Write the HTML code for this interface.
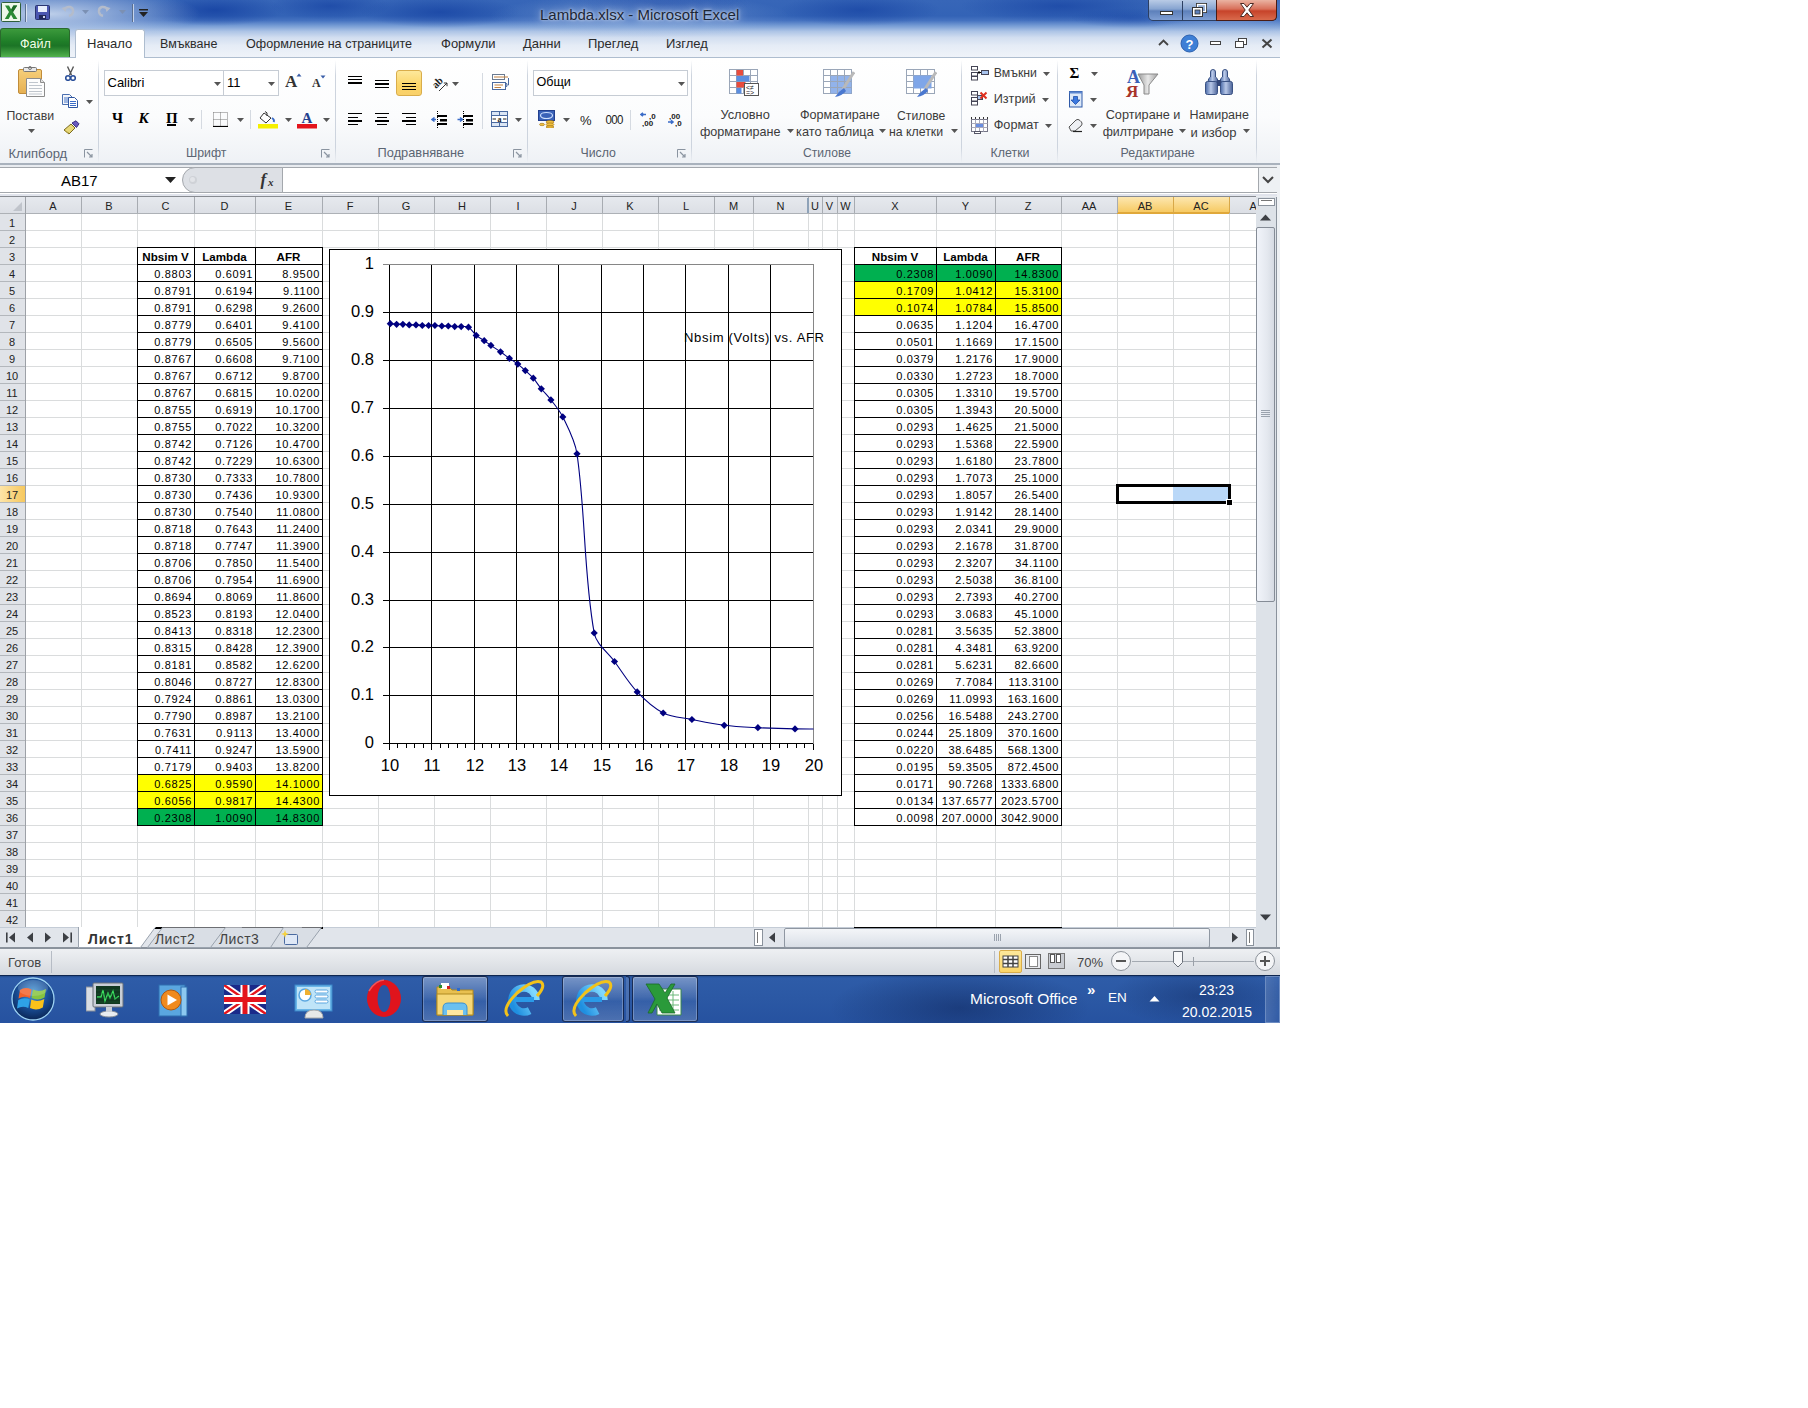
<!DOCTYPE html><html><head><meta charset="utf-8"><style>
*{margin:0;padding:0;box-sizing:border-box}
html,body{width:1808px;height:1408px;background:#fff;overflow:hidden;font-family:"Liberation Sans", sans-serif}
.a{position:absolute}
.t{position:absolute;white-space:nowrap;line-height:1}
</style></head><body>
<div class="a" style="left:0px;top:0px;width:1280px;height:57px;background:linear-gradient(180deg,#3766b8 0%,#3363b6 28%,#4572c0 36%,#759bd4 45%,#adc4e6 55%,#d2def0 66%,#e5ecf6 80%,#eff3f9 100%)"></div>
<div class="a" style="left:0px;top:0px;width:1280px;height:40px;background:radial-gradient(ellipse 70px 16px at 215px 10px,rgba(18,62,160,.75),rgba(18,62,160,0)),radial-gradient(ellipse 60px 14px at 330px 6px,rgba(18,62,160,.6),rgba(18,62,160,0)),radial-gradient(ellipse 80px 16px at 440px 12px,rgba(18,62,160,.65),rgba(18,62,160,0)),radial-gradient(ellipse 90px 14px at 660px 4px,rgba(18,62,160,.55),rgba(18,62,160,0)),radial-gradient(ellipse 80px 16px at 860px 10px,rgba(18,62,160,.6),rgba(18,62,160,0)),radial-gradient(ellipse 100px 16px at 1060px 6px,rgba(18,62,160,.6),rgba(18,62,160,0)),radial-gradient(ellipse 60px 10px at 1130px 18px,rgba(18,62,160,.4),rgba(18,62,160,0))"></div>
<div class="a" style="left:0px;top:0px;width:1280px;height:40px;background:radial-gradient(ellipse 150px 28px at 50px 14px,rgba(196,212,236,.95),rgba(196,212,236,0)),radial-gradient(ellipse 150px 22px at 640px 16px,rgba(150,180,225,.5),rgba(150,180,225,0)),radial-gradient(ellipse 90px 22px at 1230px 14px,rgba(150,180,225,.5),rgba(150,180,225,0))"></div>
<svg class="a" style="left:1px;top:2px" width="20" height="20" viewBox="0 0 20 20"><rect x="0.5" y="0.5" width="19" height="19" rx="1" fill="#eef7ea" stroke="#2f5f3a"/><path d="M4 3.5h4l2.2 4L12.4 3.5h3.8l-4.2 6.5L16.4 17h-4l-2.4-4.2L7.6 17H3.8l4.2-7Z" fill="#2a8a34"/><path d="M10.2 7.5L12.4 3.5h3.8l-4.2 6.5Z" fill="#1d6a28"/></svg>
<div class="a" style="left:25px;top:4px;width:1px;height:18px;background:#5a6f90"></div>
<div class="a" style="left:26px;top:4px;width:1px;height:18px;background:rgba(255,255,255,.6)"></div>
<svg class="a" style="left:35px;top:5px" width="15" height="15" viewBox="0 0 15 15"><rect x="0.5" y="0.5" width="14" height="14" rx="1" fill="#4a56b0" stroke="#2a3570"/><rect x="3" y="1" width="9" height="6" fill="#e8eefc"/><rect x="4" y="10" width="7" height="4" fill="#20285a"/><rect x="8" y="11" width="2" height="2" fill="#cfd6f0"/></svg>
<svg class="a" style="left:61px;top:5px" width="14" height="12" viewBox="0 0 14 12"><path d="M3 5Q5 1.5 9 2Q12.5 3 12 7Q11.5 10 8 11" stroke="#b4bccb" stroke-width="2.4" fill="none"/><path d="M0.5 3L6 1.5L4.5 7Z" fill="#b4bccb"/></svg>
<svg class="a" style="left:82px;top:10px" width="7" height="4" viewBox="0 0 7 4"><path d="M0 0H7L3.5 4Z" fill="#7b90b3"/></svg>
<svg class="a" style="left:97px;top:5px" width="14" height="12" viewBox="0 0 14 12"><path d="M11 5Q9 1.5 5 2Q1.5 3 2 7Q2.5 10 6 11" stroke="#b4bccb" stroke-width="2.4" fill="none"/><path d="M13.5 3L8 1.5L9.5 7Z" fill="#b4bccb"/></svg>
<svg class="a" style="left:119px;top:10px" width="7" height="4" viewBox="0 0 7 4"><path d="M0 0H7L3.5 4Z" fill="#7b90b3"/></svg>
<div class="a" style="left:132px;top:4px;width:1px;height:18px;background:#5a6f90"></div>
<div class="a" style="left:133px;top:4px;width:1px;height:18px;background:rgba(255,255,255,.6)"></div>
<svg class="a" style="left:139px;top:9px" width="9" height="8" viewBox="0 0 9 8"><rect x="0" y="0" width="9" height="1.5" fill="#222"/><path d="M0 3H9L4.5 8Z" fill="#222"/></svg>
<div class="t" style="left:540.0px;top:6.80px;font-size:15px;color:#1b2636;text-shadow:0 0 8px rgba(255,255,255,.9),0 0 3px rgba(255,255,255,.8)">Lambda.xlsx  -  Microsoft Excel</div>
<div class="a" style="left:1148px;top:0px;width:129px;height:21px;border:1px solid #2c3f62;border-top:none;border-radius:0 0 5px 5px;overflow:hidden;background:linear-gradient(180deg,#b9cbe6 0%,#87a4d0 45%,#5d80bb 55%,#7f9fd3 100%)"></div>
<div class="a" style="left:1216px;top:0px;width:61px;height:21px;border:1px solid #4a1c14;border-top:none;border-radius:0 0 5px 0;background:linear-gradient(180deg,#eab3a2 0%,#d8705a 45%,#c7432a 55%,#d96a4c 100%)"></div>
<div class="a" style="left:1182px;top:1px;width:1px;height:19px;background:#2c3f62"></div>
<svg class="a" style="left:1160px;top:11px" width="13" height="4" viewBox="0 0 13 4"><rect x="0.5" y="0.5" width="12" height="3" fill="#fff" stroke="#333" stroke-width="1"/></svg>
<svg class="a" style="left:1192px;top:3px" width="15" height="14" viewBox="0 0 15 14"><rect x="4.5" y="0.5" width="10" height="9" fill="none" stroke="#333" stroke-width="1"/><rect x="5.5" y="1.5" width="8" height="7" fill="none" stroke="#fff" stroke-width="1.3"/><rect x="0.5" y="4.5" width="10" height="9" fill="#fff" stroke="#333"/><rect x="3" y="7" width="5" height="4" fill="#5d80bb" stroke="#333" stroke-width=".8"/></svg>
<svg class="a" style="left:1238px;top:2px" width="18" height="16" viewBox="0 0 18 16"><path d="M2.5 1.5H6L9 5.2 12 1.5H15.5L10.8 8 15.5 14.5H12L9 10.8 6 14.5H2.5L7.2 8Z" fill="#fff" stroke="#4a2a24" stroke-width="1"/></svg>
<div class="a" style="left:0px;top:28px;width:70px;height:29px;background:linear-gradient(180deg,#3c9a3c 0%,#1f7e28 45%,#1c7426 60%,#52b24e 100%);border-radius:3px 3px 0 0;border:1px solid #2a6a2c;border-bottom:none"></div>
<div class="t" style="left:20.0px;top:37.63px;font-size:12.6px;color:#f2ffe8">Файл</div>
<div class="a" style="left:75px;top:29px;width:70px;height:29px;background:#fff;border:1px solid #aebdcf;border-bottom:none;border-radius:3px 3px 0 0"></div>
<div class="t" style="left:87.0px;top:37.30px;font-size:13px;color:#2b2b2b">Начало</div>
<div class="t" style="left:160.0px;top:37.72px;font-size:12.5px;color:#2b2b2b">Вмъкване</div>
<div class="t" style="left:246.0px;top:37.63px;font-size:12.6px;color:#2b2b2b">Оформление на страниците</div>
<div class="t" style="left:441.0px;top:37.30px;font-size:13px;color:#2b2b2b">Формули</div>
<div class="t" style="left:523.0px;top:37.30px;font-size:13px;color:#2b2b2b">Данни</div>
<div class="t" style="left:588.0px;top:37.30px;font-size:13px;color:#2b2b2b">Преглед</div>
<div class="t" style="left:666.0px;top:37.30px;font-size:13px;color:#2b2b2b">Изглед</div>
<svg class="a" style="left:1158px;top:39px" width="11" height="7" viewBox="0 0 11 7"><path d="M1 6L5.5 1.5 10 6" stroke="#444" stroke-width="1.8" fill="none"/></svg>
<svg class="a" style="left:1180px;top:34px" width="19" height="19" viewBox="0 0 19 19"><circle cx="9.5" cy="9.5" r="8.5" fill="#3d7fd6" stroke="#2a5fae"/><text x="9.5" y="14.5" text-anchor="middle" font-family="Liberation Sans" font-weight="bold" font-size="13" fill="#fff">?</text></svg>
<div class="a" style="left:1210px;top:41px;width:11px;height:4px;background:#fff;border:1px solid #444"></div>
<svg class="a" style="left:1235px;top:38px" width="13" height="11" viewBox="0 0 13 11"><rect x="3.5" y="0.5" width="8" height="6" fill="#fff" stroke="#444"/><rect x="0.5" y="3.5" width="8" height="6" fill="#fff" stroke="#444"/></svg>
<svg class="a" style="left:1261px;top:38px" width="12" height="11" viewBox="0 0 12 11"><path d="M1.5 1.5L10.5 9.5M10.5 1.5L1.5 9.5" stroke="#444" stroke-width="2"/></svg>
<div class="a" style="left:0px;top:57px;width:1280px;height:107px;background:linear-gradient(180deg,#ffffff 0%,#fbfcfd 55%,#eef1f5 100%);border-top:1px solid #aebdcf"></div>
<div class="a" style="left:0px;top:163px;width:1280px;height:2px;background:#a9b2bd"></div>
<div class="a" style="left:76px;top:57px;width:68px;height:1px;background:#fff"></div>
<div class="a" style="left:98px;top:60px;width:1px;height:103px;background:linear-gradient(180deg,rgba(205,212,222,0),#cdd4de 15%,#cdd4de 85%,rgba(205,212,222,0))"></div>
<div class="a" style="left:335px;top:60px;width:1px;height:103px;background:linear-gradient(180deg,rgba(205,212,222,0),#cdd4de 15%,#cdd4de 85%,rgba(205,212,222,0))"></div>
<div class="a" style="left:527px;top:60px;width:1px;height:103px;background:linear-gradient(180deg,rgba(205,212,222,0),#cdd4de 15%,#cdd4de 85%,rgba(205,212,222,0))"></div>
<div class="a" style="left:691px;top:60px;width:1px;height:103px;background:linear-gradient(180deg,rgba(205,212,222,0),#cdd4de 15%,#cdd4de 85%,rgba(205,212,222,0))"></div>
<div class="a" style="left:961px;top:60px;width:1px;height:103px;background:linear-gradient(180deg,rgba(205,212,222,0),#cdd4de 15%,#cdd4de 85%,rgba(205,212,222,0))"></div>
<div class="a" style="left:1057px;top:60px;width:1px;height:103px;background:linear-gradient(180deg,rgba(205,212,222,0),#cdd4de 15%,#cdd4de 85%,rgba(205,212,222,0))"></div>
<div class="a" style="left:1256px;top:60px;width:1px;height:103px;background:linear-gradient(180deg,rgba(205,212,222,0),#cdd4de 15%,#cdd4de 85%,rgba(205,212,222,0))"></div>
<div class="t" style="left:8.5px;top:146.50px;font-size:13px;color:#5b6573">Клипборд</div>
<svg class="a" style="left:84px;top:149px" width="9" height="9" viewBox="0 0 9 9"><path d="M0.5 8.5V0.5H8.5" stroke="#8a94a0" fill="none"/><path d="M3 3L8 8M5 8H8V5" stroke="#8a94a0" stroke-width="1.2" fill="none"/></svg>
<div class="t" style="left:186.0px;top:147.09px;font-size:12.3px;color:#5b6573">Шрифт</div>
<svg class="a" style="left:321px;top:149px" width="9" height="9" viewBox="0 0 9 9"><path d="M0.5 8.5V0.5H8.5" stroke="#8a94a0" fill="none"/><path d="M3 3L8 8M5 8H8V5" stroke="#8a94a0" stroke-width="1.2" fill="none"/></svg>
<div class="t" style="left:377.6px;top:146.66px;font-size:12.8px;color:#5b6573">Подравняване</div>
<svg class="a" style="left:513px;top:149px" width="9" height="9" viewBox="0 0 9 9"><path d="M0.5 8.5V0.5H8.5" stroke="#8a94a0" fill="none"/><path d="M3 3L8 8M5 8H8V5" stroke="#8a94a0" stroke-width="1.2" fill="none"/></svg>
<div class="t" style="left:580.5px;top:147.09px;font-size:12.3px;color:#5b6573">Число</div>
<svg class="a" style="left:677px;top:149px" width="9" height="9" viewBox="0 0 9 9"><path d="M0.5 8.5V0.5H8.5" stroke="#8a94a0" fill="none"/><path d="M3 3L8 8M5 8H8V5" stroke="#8a94a0" stroke-width="1.2" fill="none"/></svg>
<div class="t" style="left:803.0px;top:147.26px;font-size:12.1px;color:#5b6573">Стилове</div>
<div class="t" style="left:990.6px;top:147.00px;font-size:12.4px;color:#5b6573">Клетки</div>
<div class="t" style="left:1120.6px;top:147.00px;font-size:12.4px;color:#5b6573">Редактиране</div>
<svg class="a" style="left:17px;top:66px" width="29" height="32" viewBox="0 0 29 32"><defs><linearGradient id="cb" x1="0" y1="0" x2="0" y2="1"><stop offset="0" stop-color="#f6cf7a"/><stop offset="1" stop-color="#e6b052"/></linearGradient></defs><rect x="1.5" y="3.5" width="23" height="24" rx="1.5" fill="url(#cb)" stroke="#c08c3a"/><rect x="6.5" y="1.5" width="13" height="4" rx="1" fill="#e8e8e8" stroke="#777"/><circle cx="13" cy="2" r="1.5" fill="none" stroke="#777"/><path d="M9.5 12.5H23.5L27.5 16.5V30.5H9.5Z" fill="#fdfdfd" stroke="#8c8c8c"/><path d="M23.5 12.5V16.5H27.5" fill="#e0e0e0" stroke="#8c8c8c"/><path d="M12 16.5H21M12 19.5H25M12 22.5H25M12 25.5H25M12 28H25" stroke="#b9bfc7" stroke-width="0.9"/></svg>
<div class="t" style="left:6.5px;top:109.59px;font-size:12.3px;color:#3b3b3b">Постави</div>
<svg class="a" style="left:27.5px;top:129px" width="7" height="4" viewBox="0 0 7 4"><path d="M0 0H7L3.5 4Z" fill="#555"/></svg>
<svg class="a" style="left:65px;top:66px" width="11" height="15" viewBox="0 0 11 15"><path d="M2.5 0.5L6.5 9M8.5 0.5L4.5 9" stroke="#555" stroke-width="1.4"/><circle cx="3" cy="12" r="2.3" fill="none" stroke="#2a4f9a" stroke-width="1.6"/><circle cx="8" cy="12" r="2.3" fill="none" stroke="#2a4f9a" stroke-width="1.6"/></svg>
<svg class="a" style="left:62px;top:94px" width="17" height="14" viewBox="0 0 17 14"><path d="M0.5 0.5H7.5L10.5 3.5V10.5H0.5Z" fill="#f4f6fa" stroke="#4a6fb0"/><path d="M2 4H8M2 6H8M2 8H8" stroke="#4a78c8"/><path d="M6.5 3.5H12.5L15.5 6.5V13.5H6.5Z" fill="#fff" stroke="#2f56a0"/><path d="M8 7.5H14M8 9.5H14M8 11.5H14" stroke="#3a6cc8" stroke-width="1.2"/></svg>
<svg class="a" style="left:85.5px;top:99.5px" width="7" height="4" viewBox="0 0 7 4"><path d="M0 0H7L3.5 4Z" fill="#555"/></svg>
<svg class="a" style="left:62px;top:120px" width="18" height="16" viewBox="0 0 18 16"><path d="M2 10L9 4L13 8L7 14Z" fill="#e8d878" stroke="#7a6a20"/><path d="M10 3L14 0.8L17 3.8L14.5 7.5Z" fill="#6a5ac0" stroke="#3a2f80"/><path d="M3 11L7 13" stroke="#b8a440"/></svg>
<div class="a" style="left:104px;top:70px;width:120px;height:26px;background:#fff;border:1px solid #c6ccd4"></div>
<div class="a" style="left:223px;top:70px;width:56px;height:26px;background:#fff;border:1px solid #c6ccd4"></div>
<div class="t" style="left:107.5px;top:76.00px;font-size:13px;color:#000">Calibri</div>
<div class="t" style="left:227.0px;top:76.00px;font-size:13px;color:#000">11</div>
<svg class="a" style="left:213.5px;top:82px" width="7" height="4" viewBox="0 0 7 4"><path d="M0 0H7L3.5 4Z" fill="#555"/></svg>
<svg class="a" style="left:268px;top:82px" width="7" height="4" viewBox="0 0 7 4"><path d="M0 0H7L3.5 4Z" fill="#555"/></svg>
<svg class="a" style="left:285px;top:73px" width="17" height="15" viewBox="0 0 17 15"><text x="0" y="14" font-family="Liberation Serif" font-weight="bold" font-size="17" fill="#333">A</text><path d="M11.5 3.5H16.5L14 0.5Z" fill="#3a5ea8"/></svg>
<svg class="a" style="left:311px;top:75px" width="15" height="13" viewBox="0 0 15 13"><text x="1" y="12" font-family="Liberation Serif" font-weight="bold" font-size="12" fill="#333">A</text><path d="M9.5 0.5H14.5L12 3.5Z" fill="#3a5ea8"/></svg>
<div class="t" style="left:112.0px;top:110.50px;font-size:15px;color:#000;font-family:Liberation Serif,serif;font-weight:bold">Ч</div>
<div class="t" style="left:138.5px;top:110.50px;font-size:15px;color:#000;font-family:Liberation Serif,serif;font-weight:bold;font-style:italic">К</div>
<div class="t" style="left:166.0px;top:110.50px;font-size:15px;color:#000;font-family:Liberation Serif,serif;font-weight:bold">П</div>
<div class="a" style="left:167px;top:124px;width:9px;height:1.6px;background:#000"></div>
<svg class="a" style="left:187.5px;top:117.5px" width="7" height="4" viewBox="0 0 7 4"><path d="M0 0H7L3.5 4Z" fill="#555"/></svg>
<div class="a" style="left:201px;top:110px;width:1px;height:19px;background:#d5dae1"></div>
<svg class="a" style="left:213px;top:112px" width="15" height="15" viewBox="0 0 15 15"><path d="M0.5 0.5H14.5M0.5 7.5H14.5M0.5 0.5V14M7.5 0.5V14M14.5 0.5V14" stroke="#777" stroke-dasharray="1 1" fill="none"/><path d="M0 14.5H15" stroke="#000" stroke-width="1.2"/></svg>
<svg class="a" style="left:236.5px;top:117.5px" width="7" height="4" viewBox="0 0 7 4"><path d="M0 0H7L3.5 4Z" fill="#555"/></svg>
<div class="a" style="left:250px;top:110px;width:1px;height:19px;background:#d5dae1"></div>
<svg class="a" style="left:258px;top:111px" width="21" height="18" viewBox="0 0 21 18"><path d="M6 2L13 7L8 12L2 7Z" fill="#fff" stroke="#333"/><path d="M7 0.5Q10 1 9 5" stroke="#333" fill="none"/><path d="M14 7Q17 9 15.5 11" stroke="#3a6cc8" stroke-width="2" fill="none"/><rect x="0" y="13" width="20" height="4.5" fill="#f5f000"/></svg>
<svg class="a" style="left:284.5px;top:117.5px" width="7" height="4" viewBox="0 0 7 4"><path d="M0 0H7L3.5 4Z" fill="#555"/></svg>
<svg class="a" style="left:297px;top:111px" width="20" height="18" viewBox="0 0 20 18"><text x="10" y="11.5" text-anchor="middle" font-family="Liberation Serif" font-weight="bold" font-size="15" fill="#23408e">A</text><rect x="0" y="13" width="20" height="4.5" fill="#e4141c"/></svg>
<svg class="a" style="left:322.5px;top:117.5px" width="7" height="4" viewBox="0 0 7 4"><path d="M0 0H7L3.5 4Z" fill="#555"/></svg>
<div class="a" style="left:348px;top:75.5px;width:14px;height:1.3px;background:#000"></div>
<div class="a" style="left:348px;top:78.9px;width:14px;height:1.3px;background:#000"></div>
<div class="a" style="left:348px;top:82.3px;width:14px;height:1.3px;background:#000"></div>
<div class="a" style="left:375px;top:80.0px;width:14px;height:1.3px;background:#000"></div>
<div class="a" style="left:375px;top:83.4px;width:14px;height:1.3px;background:#000"></div>
<div class="a" style="left:375px;top:86.8px;width:14px;height:1.3px;background:#000"></div>
<div class="a" style="left:396px;top:70px;width:26px;height:26px;border:1px solid #d9ad4b;border-radius:3px;background:linear-gradient(180deg,#fde89b,#fbd568 60%,#f9d06a)"></div>
<div class="a" style="left:402px;top:83.0px;width:14px;height:1.3px;background:#000"></div>
<div class="a" style="left:402px;top:86.1px;width:14px;height:1.3px;background:#000"></div>
<div class="a" style="left:402px;top:89.2px;width:14px;height:1.3px;background:#000"></div>
<svg class="a" style="left:429px;top:72px" width="22" height="22" viewBox="0 0 22 22"><g transform="rotate(-45 9 10)"><text x="2.5" y="13.5" font-family="Liberation Serif" font-weight="bold" font-size="10.5" fill="#222">ab</text></g><path d="M10 19L18 11M18 11H14.8M18 11V14.2" stroke="#333" stroke-width="1" fill="none"/></svg>
<svg class="a" style="left:451.5px;top:81.5px" width="7" height="4" viewBox="0 0 7 4"><path d="M0 0H7L3.5 4Z" fill="#555"/></svg>
<div class="a" style="left:482px;top:73px;width:1px;height:56px;background:#d5dae1"></div>
<svg class="a" style="left:491px;top:74px" width="19" height="17" viewBox="0 0 19 17"><rect x="1.5" y="0.5" width="12" height="5" fill="#fff" stroke="#6a7a90"/><path d="M3 3H17" stroke="#c08040" stroke-width="1"/><rect x="1.5" y="8.5" width="13" height="7" fill="#fff" stroke="#4a6aa0"/><path d="M3.5 11H12M3.5 13.5H10" stroke="#c08040"/><path d="M17.5 4V11H15M16 9L14.5 11L16 13" stroke="#4a6aa0" fill="none"/></svg>
<div class="a" style="left:348px;top:113.0px;width:14px;height:1.4px;background:#000"></div>
<div class="a" style="left:348px;top:116.7px;width:10px;height:1.4px;background:#000"></div>
<div class="a" style="left:348px;top:120.4px;width:14px;height:1.4px;background:#000"></div>
<div class="a" style="left:348px;top:124.1px;width:10px;height:1.4px;background:#000"></div>
<div class="a" style="left:375px;top:113.0px;width:14px;height:1.4px;background:#000"></div>
<div class="a" style="left:377px;top:116.7px;width:10px;height:1.4px;background:#000"></div>
<div class="a" style="left:375px;top:120.4px;width:14px;height:1.4px;background:#000"></div>
<div class="a" style="left:377px;top:124.1px;width:10px;height:1.4px;background:#000"></div>
<div class="a" style="left:402px;top:113.0px;width:14px;height:1.4px;background:#000"></div>
<div class="a" style="left:406px;top:116.7px;width:10px;height:1.4px;background:#000"></div>
<div class="a" style="left:402px;top:120.4px;width:14px;height:1.4px;background:#000"></div>
<div class="a" style="left:406px;top:124.1px;width:10px;height:1.4px;background:#000"></div>
<svg class="a" style="left:431px;top:111px" width="17" height="17" viewBox="0 0 17 17"><path d="M6 5H16M9 9H16M9 9.5H16M6 13H16" stroke="#000" stroke-width="1.8"/><path d="M5 8.5H0.8M3.5 6.5L1 8.5L3.5 10.5" stroke="#3a6cc8" stroke-width="1.6" fill="none"/><path d="M6.5 0V17" stroke="#000" stroke-dasharray="1 1"/></svg>
<svg class="a" style="left:457px;top:111px" width="17" height="17" viewBox="0 0 17 17"><path d="M6 5H16M9 9H16M9 9.5H16M6 13H16" stroke="#000" stroke-width="1.8"/><path d="M0.5 8.5H5M3 6.5L5.5 8.5L3 10.5" stroke="#3a6cc8" stroke-width="1.6" fill="none"/><path d="M6.5 0V17" stroke="#000" stroke-dasharray="1 1"/></svg>
<svg class="a" style="left:491px;top:111px" width="17" height="16" viewBox="0 0 17 16"><rect x="0.5" y="0.5" width="16" height="15" fill="#dbe6f5" stroke="#4a6aa0"/><path d="M0.5 4.5H16.5M0.5 11.5H16.5M8.5 0.5V4.5M8.5 11.5V15.5" stroke="#4a6aa0"/><rect x="1" y="5" width="15" height="6" fill="#fff"/><text x="8.5" y="10.5" text-anchor="middle" font-family="Liberation Serif" font-weight="bold" font-size="8" fill="#222">a</text><path d="M1.5 8H5M12 8H15.5" stroke="#222"/></svg>
<svg class="a" style="left:515px;top:117.5px" width="7" height="4" viewBox="0 0 7 4"><path d="M0 0H7L3.5 4Z" fill="#555"/></svg>
<div class="a" style="left:533px;top:70px;width:155px;height:26px;background:#fff;border:1px solid #c6ccd4"></div>
<div class="t" style="left:536.5px;top:76.03px;font-size:12.6px;color:#000">Общи</div>
<svg class="a" style="left:677.5px;top:81.5px" width="7" height="4" viewBox="0 0 7 4"><path d="M0 0H7L3.5 4Z" fill="#555"/></svg>
<svg class="a" style="left:538px;top:110px" width="18" height="18" viewBox="0 0 18 18"><rect x="0.5" y="0.5" width="16" height="10" fill="#3a62b8" stroke="#23408e"/><ellipse cx="8.5" cy="5.5" rx="6" ry="3" fill="none" stroke="#cfe0ff" stroke-width="1.2"/><ellipse cx="12" cy="12" rx="4" ry="1.6" fill="#f0c040" stroke="#a07010" stroke-width=".6"/><ellipse cx="12" cy="14.5" rx="4" ry="1.6" fill="#f0c040" stroke="#a07010" stroke-width=".6"/><ellipse cx="12" cy="17" rx="4" ry="1.2" fill="#f0c040" stroke="#a07010" stroke-width=".6"/><ellipse cx="4" cy="14.5" rx="2.5" ry="1.2" fill="#f0c040" stroke="#a07010" stroke-width=".6"/></svg>
<svg class="a" style="left:562.5px;top:117.5px" width="7" height="4" viewBox="0 0 7 4"><path d="M0 0H7L3.5 4Z" fill="#555"/></svg>
<div class="t" style="left:580.0px;top:113.50px;font-size:13px;color:#222">%</div>
<div class="t" style="left:605.5px;top:114.77px;font-size:11.5px;color:#222;letter-spacing:-0.6px;transform:scaleY(1.15)">000</div>
<div class="a" style="left:630px;top:110px;width:1px;height:20px;background:#d5dae1"></div>
<svg class="a" style="left:640px;top:112px" width="17" height="15" viewBox="0 0 17 15"><path d="M6 2.5H1M3 0.8L1 2.5L3 4.2" stroke="#3a6cc8" stroke-width="1.6" fill="none"/><text x="9" y="6.5" font-family="Liberation Sans" font-weight="bold" font-size="8" fill="#222">,0</text><text x="2" y="14" font-family="Liberation Sans" font-weight="bold" font-size="8" fill="#222">,00</text></svg>
<svg class="a" style="left:667px;top:112px" width="17" height="15" viewBox="0 0 17 15"><text x="2" y="6.5" font-family="Liberation Sans" font-weight="bold" font-size="8" fill="#222">,00</text><path d="M1 10H6M4 8.3L6 10L4 11.7" stroke="#3a6cc8" stroke-width="1.6" fill="none"/><text x="8" y="14" font-family="Liberation Sans" font-weight="bold" font-size="8" fill="#222">,0</text></svg>
<svg class="a" style="left:729px;top:69px" width="31" height="28" viewBox="0 0 31 28"><rect x="0.5" y="0.5" width="28" height="24" fill="#fff" stroke="#9aa6b8"/><path d="M7.5 0.5V24.5" stroke="#9aa6b8"/><path d="M14.5 0.5V24.5" stroke="#9aa6b8"/><path d="M21.5 0.5V24.5" stroke="#9aa6b8"/><path d="M0.5 6.5H28.5" stroke="#9aa6b8"/><path d="M0.5 12.5H28.5" stroke="#9aa6b8"/><path d="M0.5 18.5H28.5" stroke="#9aa6b8"/><rect x="7.5" y="1" width="6.5" height="5.5" fill="#e84c3d"/><rect x="7.5" y="7" width="13" height="5.5" fill="#5b8ee0"/><rect x="7.5" y="13" width="9" height="5.5" fill="#e84c3d"/><rect x="7.5" y="19" width="5" height="5.5" fill="#5b8ee0"/><rect x="15.5" y="14.5" width="14" height="12" fill="#fff" stroke="#555"/><text x="17" y="21" font-family="Liberation Sans" font-size="7" fill="#222">&lt;≠</text><text x="17" y="26" font-family="Liberation Sans" font-size="7" fill="#222">=&gt;</text></svg>
<svg class="a" style="left:823px;top:69px" width="32" height="29" viewBox="0 0 32 29"><rect x="0.5" y="0.5" width="28" height="24" fill="#fff" stroke="#9aa6b8"/><path d="M7.5 0.5V24.5" stroke="#9aa6b8"/><path d="M14.5 0.5V24.5" stroke="#9aa6b8"/><path d="M21.5 0.5V24.5" stroke="#9aa6b8"/><path d="M0.5 6.5H28.5" stroke="#9aa6b8"/><path d="M0.5 12.5H28.5" stroke="#9aa6b8"/><path d="M0.5 18.5H28.5" stroke="#9aa6b8"/><rect x="7.5" y="7" width="21" height="17.5" fill="#7fa6e8" opacity=".85"/><path d="M14.5 7V24.5M21.5 7V24.5M7.5 12.5H28.5M7.5 18.5H28.5" stroke="#9aa6b8"/><path d="M31 3L20 20" stroke="#b9b9b9" stroke-width="3"/><path d="M21 19Q16 22 12 28Q19 27 23 22Z" fill="#4a78d0"/></svg>
<svg class="a" style="left:906px;top:69px" width="31" height="29" viewBox="0 0 31 29"><rect x="0.5" y="0.5" width="28" height="24" fill="#fff" stroke="#9aa6b8"/><path d="M7.5 0.5V24.5" stroke="#9aa6b8"/><path d="M14.5 0.5V24.5" stroke="#9aa6b8"/><path d="M21.5 0.5V24.5" stroke="#9aa6b8"/><path d="M0.5 6.5H28.5" stroke="#9aa6b8"/><path d="M0.5 12.5H28.5" stroke="#9aa6b8"/><path d="M0.5 18.5H28.5" stroke="#9aa6b8"/><rect x="7.5" y="6.5" width="18" height="13" fill="#7fa6e8"/><path d="M30 3L19 20" stroke="#b9b9b9" stroke-width="3"/><path d="M20 19Q15 22 11 28Q18 27 22 22Z" fill="#4a78d0"/></svg>
<div class="t" style="left:720.4px;top:109.16px;font-size:12.8px;color:#3b3b3b">Условно</div>
<div class="t" style="left:700.0px;top:125.73px;font-size:12.6px;color:#3b3b3b">форматиране</div>
<svg class="a" style="left:786.5px;top:129px" width="7" height="4" viewBox="0 0 7 4"><path d="M0 0H7L3.5 4Z" fill="#555"/></svg>
<div class="t" style="left:800.0px;top:109.33px;font-size:12.6px;color:#3b3b3b">Форматиране</div>
<div class="t" style="left:796.0px;top:125.56px;font-size:12.8px;color:#3b3b3b">като таблица</div>
<svg class="a" style="left:878.5px;top:129px" width="7" height="4" viewBox="0 0 7 4"><path d="M0 0H7L3.5 4Z" fill="#555"/></svg>
<div class="t" style="left:897.0px;top:109.67px;font-size:12.2px;color:#3b3b3b">Стилове</div>
<div class="t" style="left:889.0px;top:125.99px;font-size:12.3px;color:#3b3b3b">на клетки</div>
<svg class="a" style="left:950.5px;top:129px" width="7" height="4" viewBox="0 0 7 4"><path d="M0 0H7L3.5 4Z" fill="#555"/></svg>
<svg class="a" style="left:971px;top:66px" width="18" height="15" viewBox="0 0 18 15"><rect x="0.5" y="0.5" width="6" height="3.5" fill="#fff" stroke="#445"/><rect x="0.5" y="6.5" width="6" height="3.5" fill="#fff" stroke="#445"/><rect x="0.5" y="10.5" width="6" height="3.5" fill="#fff" stroke="#445"/><rect x="10.5" y="4.5" width="7" height="4" fill="#a8c4ee" stroke="#445"/><path d="M7 6.5H10M8 5V8" stroke="#000"/></svg>
<div class="t" style="left:993.7px;top:67.29px;font-size:12.3px;color:#3b3b3b">Вмъкни</div>
<svg class="a" style="left:1042.5px;top:71.5px" width="7" height="4" viewBox="0 0 7 4"><path d="M0 0H7L3.5 4Z" fill="#555"/></svg>
<svg class="a" style="left:971px;top:91px" width="17" height="15" viewBox="0 0 17 15"><rect x="0.5" y="0.5" width="6" height="3.5" fill="#fff" stroke="#445"/><rect x="0.5" y="6.5" width="6" height="3.5" fill="#fff" stroke="#445"/><rect x="0.5" y="10.5" width="6" height="3.5" fill="#fff" stroke="#445"/><rect x="6.5" y="4.5" width="5" height="4" fill="#a8c4ee" stroke="#445"/><path d="M9.5 1.5L15.5 7.5M15.5 1.5L9.5 7.5" stroke="#e0301e" stroke-width="2"/></svg>
<div class="t" style="left:993.7px;top:92.95px;font-size:12.7px;color:#3b3b3b">Изтрий</div>
<svg class="a" style="left:1041.5px;top:97.5px" width="7" height="4" viewBox="0 0 7 4"><path d="M0 0H7L3.5 4Z" fill="#555"/></svg>
<svg class="a" style="left:971px;top:117px" width="18" height="17" viewBox="0 0 18 17"><rect x="0.5" y="2.5" width="16" height="12" fill="#fff" stroke="#778"/><path d="M4.5 2.5V14.5M8.5 2.5V14.5M12.5 2.5V14.5M0.5 6.5H16.5M0.5 10.5H16.5" stroke="#aab"/><rect x="5" y="7" width="7" height="3" fill="#6a8ee0"/><path d="M0.5 0V2M4.5 0V2M8.5 0V2M12.5 0V2M16.5 0V2" stroke="#333"/><rect x="3.5" y="14.5" width="6" height="2" fill="#fff" stroke="#556"/></svg>
<div class="t" style="left:993.7px;top:119.25px;font-size:12.7px;color:#3b3b3b">Формат</div>
<svg class="a" style="left:1044.5px;top:123.5px" width="7" height="4" viewBox="0 0 7 4"><path d="M0 0H7L3.5 4Z" fill="#555"/></svg>
<div class="t" style="left:1069.5px;top:65.80px;font-size:15px;color:#000;font-weight:bold;font-family:Liberation Serif,serif">Σ</div>
<svg class="a" style="left:1090.5px;top:71.5px" width="7" height="4" viewBox="0 0 7 4"><path d="M0 0H7L3.5 4Z" fill="#555"/></svg>
<svg class="a" style="left:1069px;top:91px" width="14" height="17" viewBox="0 0 14 17"><rect x="0.5" y="0.5" width="12.5" height="15.5" fill="#dce8f8" stroke="#2f5aa8"/><rect x="0.5" y="0.5" width="12.5" height="2" fill="#5a86d0"/><path d="M4.5 5.5H8.5V9H11L6.5 13.5L2 9H4.5Z" fill="#3a78e0" stroke="#1f4fa8" stroke-width=".8"/></svg>
<svg class="a" style="left:1089.5px;top:97.5px" width="7" height="4" viewBox="0 0 7 4"><path d="M0 0H7L3.5 4Z" fill="#555"/></svg>
<svg class="a" style="left:1068px;top:118px" width="16" height="15" viewBox="0 0 16 15"><path d="M1 9L8 2Q10 0.5 12 2.5L13.5 4Q15 6 13 8L7 13H3Z" fill="#eef0f4" stroke="#555"/><path d="M5 13.5H14" stroke="#222" stroke-width="1.2"/></svg>
<svg class="a" style="left:1089.5px;top:123.5px" width="7" height="4" viewBox="0 0 7 4"><path d="M0 0H7L3.5 4Z" fill="#555"/></svg>
<svg class="a" style="left:1125px;top:66px" width="34" height="32" viewBox="0 0 34 32"><defs><linearGradient id="fun" x1="0" y1="0" x2="1" y2="0"><stop offset="0" stop-color="#9a9a9a"/><stop offset=".5" stop-color="#e8e8e8"/><stop offset="1" stop-color="#a0a0a0"/></linearGradient></defs><path d="M13 8H33L24 19V28H19V19Z" fill="url(#fun)" stroke="#8a8a8a"/><text x="2" y="17" font-family="Liberation Serif" font-weight="bold" font-size="18" fill="#3a60b8">A</text><text x="1" y="31" font-family="Liberation Serif" font-weight="bold" font-size="17" fill="#a8342a">Я</text></svg>
<svg class="a" style="left:1178.5px;top:129px" width="7" height="4" viewBox="0 0 7 4"><path d="M0 0H7L3.5 4Z" fill="#555"/></svg>
<svg class="a" style="left:1204px;top:68px" width="30" height="28" viewBox="0 0 30 28"><defs><linearGradient id="bin" x1="0" y1="0" x2="1" y2="0"><stop offset="0" stop-color="#4a6aa8"/><stop offset=".45" stop-color="#b8c8e8"/><stop offset="1" stop-color="#4a6298"/></linearGradient></defs><path d="M4 14Q4 10 6.5 9V4Q6.5 1.5 9 1.5Q11.5 1.5 11.5 4V9Q14 10 14 14Z" fill="url(#bin)" stroke="#3a5284"/><path d="M16 14Q16 10 18.5 9V4Q18.5 1.5 21 1.5Q23.5 1.5 23.5 4V9Q26 10 26 14Z" fill="url(#bin)" stroke="#3a5284"/><rect x="1.5" y="13.5" width="12" height="13" rx="2" fill="url(#bin)" stroke="#3a5284"/><rect x="16.5" y="13.5" width="12" height="13" rx="2" fill="url(#bin)" stroke="#3a5284"/><rect x="13" y="12" width="4" height="6" fill="#34487a"/></svg>
<div class="t" style="left:1105.7px;top:109.25px;font-size:12.7px;color:#3b3b3b">Сортиране и</div>
<div class="t" style="left:1102.7px;top:126.39px;font-size:12.3px;color:#3b3b3b">филтриране</div>
<div class="t" style="left:1189.6px;top:109.42px;font-size:12.5px;color:#3b3b3b">Намиране</div>
<div class="t" style="left:1190.6px;top:125.80px;font-size:13px;color:#3b3b3b">и избор</div>
<svg class="a" style="left:1242.5px;top:129px" width="7" height="4" viewBox="0 0 7 4"><path d="M0 0H7L3.5 4Z" fill="#555"/></svg>
<div class="a" style="left:0px;top:165px;width:1280px;height:32px;background:#e8ebef"></div>
<div class="a" style="left:0px;top:167px;width:1258px;height:26px;background:#fff;border-top:1px solid #a4a8ad;border-bottom:1px solid #a4a8ad"></div>
<div class="a" style="left:0px;top:193px;width:1280px;height:1px;background:#fff"></div>
<div class="a" style="left:0px;top:194px;width:1280px;height:2px;background:#e1e4ec"></div>
<div class="a" style="left:182px;top:167px;width:101px;height:26px;background:#dde0e5;border-radius:13px 0 0 13px;border:1px solid #a4a8ad;border-left:1px solid #a4a8ad"></div>
<svg class="a" style="left:188px;top:175px" width="10" height="10" viewBox="0 0 10 10"><circle cx="5" cy="5" r="4" fill="#cfd2d7"/><circle cx="4.5" cy="4.5" r="2.5" fill="#e2e4e8"/></svg>
<div class="t" style="left:61.0px;top:172.90px;font-size:15px;color:#000">AB17</div>
<svg class="a" style="left:165px;top:177px" width="11" height="6" viewBox="0 0 11 6"><path d="M0 0H11L5.5 6Z" fill="#222"/></svg>
<svg class="a" style="left:259px;top:171px" width="20" height="19" viewBox="0 0 20 19"><text x="1.5" y="14" font-family="Liberation Serif" font-style="italic" font-weight="bold" font-size="17" fill="#333">f</text><text x="9" y="15" font-family="Liberation Serif" font-style="italic" font-weight="bold" font-size="11" fill="#333">x</text></svg>
<div class="a" style="left:1258px;top:167px;width:20px;height:26px;background:#eef1f4;border:1px solid #a4a8ad"></div>
<svg class="a" style="left:1262px;top:176px" width="12" height="8" viewBox="0 0 12 8"><path d="M1 1L6 6L11 1" stroke="#444" stroke-width="2" fill="none"/></svg>
<div class="a" style="left:0px;top:197px;width:1256px;height:730px;background:#fff"></div>
<div class="a" style="left:0px;top:196px;width:1256px;height:1px;background:#878b91"></div>
<div class="a" style="left:0px;top:197px;width:1256px;height:16px;background:linear-gradient(180deg,#e6e9ee,#dcdfe5)"></div>
<div class="a" style="left:0px;top:213px;width:1256px;height:1px;background:#adb1b6"></div>
<div class="a" style="left:0px;top:214px;width:25px;height:713px;background:#e0e3e8"></div>
<div class="a" style="left:25px;top:197px;width:1px;height:730px;background:#9da1a7"></div>
<svg class="a" style="left:13px;top:202px" width="9" height="9" viewBox="0 0 9 9"><path d="M9 0V9H0Z" fill="#c0c4cb"/></svg>
<div class="a" style="left:1117px;top:197px;width:56px;height:16px;background:linear-gradient(180deg,#fde7b0,#f6c85e)"></div>
<div class="a" style="left:1117px;top:212px;width:56px;height:2px;background:#e0a83a"></div>
<div class="a" style="left:1173px;top:197px;width:56px;height:16px;background:linear-gradient(180deg,#fde7b0,#f6c85e)"></div>
<div class="a" style="left:1173px;top:212px;width:56px;height:2px;background:#e0a83a"></div>
<div class="a" style="left:81px;top:197px;width:1px;height:16px;background:#a7abb1"></div>
<div class="a" style="left:137px;top:197px;width:1px;height:16px;background:#a7abb1"></div>
<div class="a" style="left:194px;top:197px;width:1px;height:16px;background:#a7abb1"></div>
<div class="a" style="left:255px;top:197px;width:1px;height:16px;background:#a7abb1"></div>
<div class="a" style="left:322px;top:197px;width:1px;height:16px;background:#a7abb1"></div>
<div class="a" style="left:378px;top:197px;width:1px;height:16px;background:#a7abb1"></div>
<div class="a" style="left:434px;top:197px;width:1px;height:16px;background:#a7abb1"></div>
<div class="a" style="left:490px;top:197px;width:1px;height:16px;background:#a7abb1"></div>
<div class="a" style="left:546px;top:197px;width:1px;height:16px;background:#a7abb1"></div>
<div class="a" style="left:602px;top:197px;width:1px;height:16px;background:#a7abb1"></div>
<div class="a" style="left:658px;top:197px;width:1px;height:16px;background:#a7abb1"></div>
<div class="a" style="left:714px;top:197px;width:1px;height:16px;background:#a7abb1"></div>
<div class="a" style="left:753px;top:197px;width:1px;height:16px;background:#a7abb1"></div>
<div class="a" style="left:808px;top:197px;width:1px;height:16px;background:#a7abb1"></div>
<div class="a" style="left:822px;top:197px;width:1px;height:16px;background:#a7abb1"></div>
<div class="a" style="left:837px;top:197px;width:1px;height:16px;background:#a7abb1"></div>
<div class="a" style="left:854px;top:197px;width:1px;height:16px;background:#a7abb1"></div>
<div class="a" style="left:936px;top:197px;width:1px;height:16px;background:#a7abb1"></div>
<div class="a" style="left:995px;top:197px;width:1px;height:16px;background:#a7abb1"></div>
<div class="a" style="left:1061px;top:197px;width:1px;height:16px;background:#a7abb1"></div>
<div class="a" style="left:1117px;top:197px;width:1px;height:16px;background:#a7abb1"></div>
<div class="a" style="left:1173px;top:197px;width:1px;height:16px;background:#d8a848"></div>
<div class="a" style="left:1229px;top:197px;width:1px;height:16px;background:#d8a848"></div>
<div class="a" style="left:1256px;top:197px;width:1px;height:16px;background:#a7abb1"></div>
<div class="t" style="left:25.0px;top:200.69px;font-size:11px;width:56px;text-align:center;color:#222">A</div>
<div class="t" style="left:81.0px;top:200.69px;font-size:11px;width:56px;text-align:center;color:#222">B</div>
<div class="t" style="left:137.0px;top:200.69px;font-size:11px;width:57px;text-align:center;color:#222">C</div>
<div class="t" style="left:194.0px;top:200.69px;font-size:11px;width:61px;text-align:center;color:#222">D</div>
<div class="t" style="left:255.0px;top:200.69px;font-size:11px;width:67px;text-align:center;color:#222">E</div>
<div class="t" style="left:322.0px;top:200.69px;font-size:11px;width:56px;text-align:center;color:#222">F</div>
<div class="t" style="left:378.0px;top:200.69px;font-size:11px;width:56px;text-align:center;color:#222">G</div>
<div class="t" style="left:434.0px;top:200.69px;font-size:11px;width:56px;text-align:center;color:#222">H</div>
<div class="t" style="left:490.0px;top:200.69px;font-size:11px;width:56px;text-align:center;color:#222">I</div>
<div class="t" style="left:546.0px;top:200.69px;font-size:11px;width:56px;text-align:center;color:#222">J</div>
<div class="t" style="left:602.0px;top:200.69px;font-size:11px;width:56px;text-align:center;color:#222">K</div>
<div class="t" style="left:658.0px;top:200.69px;font-size:11px;width:56px;text-align:center;color:#222">L</div>
<div class="t" style="left:714.0px;top:200.69px;font-size:11px;width:39px;text-align:center;color:#222">M</div>
<div class="t" style="left:753.0px;top:200.69px;font-size:11px;width:55px;text-align:center;color:#222">N</div>
<div class="t" style="left:808.0px;top:200.69px;font-size:11px;width:14px;text-align:center;color:#222">U</div>
<div class="t" style="left:822.0px;top:200.69px;font-size:11px;width:15px;text-align:center;color:#222">V</div>
<div class="t" style="left:837.0px;top:200.69px;font-size:11px;width:17px;text-align:center;color:#222">W</div>
<div class="t" style="left:854.0px;top:200.69px;font-size:11px;width:82px;text-align:center;color:#222">X</div>
<div class="t" style="left:936.0px;top:200.69px;font-size:11px;width:59px;text-align:center;color:#222">Y</div>
<div class="t" style="left:995.0px;top:200.69px;font-size:11px;width:66px;text-align:center;color:#222">Z</div>
<div class="t" style="left:1061.0px;top:200.69px;font-size:11px;width:56px;text-align:center;color:#222">AA</div>
<div class="t" style="left:1117.0px;top:200.69px;font-size:11px;width:56px;text-align:center;color:#222">AB</div>
<div class="t" style="left:1173.0px;top:200.69px;font-size:11px;width:56px;text-align:center;color:#222">AC</div>
<div class="t" style="left:1249.5px;top:200.69px;font-size:11px;color:#222">A</div>
<div class="a" style="left:81px;top:214px;width:1px;height:713px;background:#dadcdd"></div>
<div class="a" style="left:137px;top:214px;width:1px;height:713px;background:#dadcdd"></div>
<div class="a" style="left:194px;top:214px;width:1px;height:713px;background:#dadcdd"></div>
<div class="a" style="left:255px;top:214px;width:1px;height:713px;background:#dadcdd"></div>
<div class="a" style="left:322px;top:214px;width:1px;height:713px;background:#dadcdd"></div>
<div class="a" style="left:378px;top:214px;width:1px;height:713px;background:#dadcdd"></div>
<div class="a" style="left:434px;top:214px;width:1px;height:713px;background:#dadcdd"></div>
<div class="a" style="left:490px;top:214px;width:1px;height:713px;background:#dadcdd"></div>
<div class="a" style="left:546px;top:214px;width:1px;height:713px;background:#dadcdd"></div>
<div class="a" style="left:602px;top:214px;width:1px;height:713px;background:#dadcdd"></div>
<div class="a" style="left:658px;top:214px;width:1px;height:713px;background:#dadcdd"></div>
<div class="a" style="left:714px;top:214px;width:1px;height:713px;background:#dadcdd"></div>
<div class="a" style="left:753px;top:214px;width:1px;height:713px;background:#dadcdd"></div>
<div class="a" style="left:808px;top:214px;width:1px;height:713px;background:#dadcdd"></div>
<div class="a" style="left:822px;top:214px;width:1px;height:713px;background:#dadcdd"></div>
<div class="a" style="left:837px;top:214px;width:1px;height:713px;background:#dadcdd"></div>
<div class="a" style="left:854px;top:214px;width:1px;height:713px;background:#dadcdd"></div>
<div class="a" style="left:936px;top:214px;width:1px;height:713px;background:#dadcdd"></div>
<div class="a" style="left:995px;top:214px;width:1px;height:713px;background:#dadcdd"></div>
<div class="a" style="left:1061px;top:214px;width:1px;height:713px;background:#dadcdd"></div>
<div class="a" style="left:1117px;top:214px;width:1px;height:713px;background:#dadcdd"></div>
<div class="a" style="left:1173px;top:214px;width:1px;height:713px;background:#dadcdd"></div>
<div class="a" style="left:1229px;top:214px;width:1px;height:713px;background:#dadcdd"></div>
<div class="a" style="left:1256px;top:214px;width:1px;height:713px;background:#dadcdd"></div>
<div class="a" style="left:807px;top:198px;width:2px;height:15px;background:#8ea2b8"></div>
<div class="a" style="left:26px;top:230px;width:1230px;height:1px;background:#dadcdd"></div>
<div class="a" style="left:0px;top:230px;width:25px;height:1px;background:#b3b7bc"></div>
<div class="t" style="left:0.0px;top:217.69px;font-size:11px;width:24px;text-align:center;color:#222">1</div>
<div class="a" style="left:26px;top:247px;width:1230px;height:1px;background:#dadcdd"></div>
<div class="a" style="left:0px;top:247px;width:25px;height:1px;background:#b3b7bc"></div>
<div class="t" style="left:0.0px;top:234.69px;font-size:11px;width:24px;text-align:center;color:#222">2</div>
<div class="a" style="left:26px;top:264px;width:1230px;height:1px;background:#dadcdd"></div>
<div class="a" style="left:0px;top:264px;width:25px;height:1px;background:#b3b7bc"></div>
<div class="t" style="left:0.0px;top:251.69px;font-size:11px;width:24px;text-align:center;color:#222">3</div>
<div class="a" style="left:26px;top:281px;width:1230px;height:1px;background:#dadcdd"></div>
<div class="a" style="left:0px;top:281px;width:25px;height:1px;background:#b3b7bc"></div>
<div class="t" style="left:0.0px;top:268.69px;font-size:11px;width:24px;text-align:center;color:#222">4</div>
<div class="a" style="left:26px;top:298px;width:1230px;height:1px;background:#dadcdd"></div>
<div class="a" style="left:0px;top:298px;width:25px;height:1px;background:#b3b7bc"></div>
<div class="t" style="left:0.0px;top:285.69px;font-size:11px;width:24px;text-align:center;color:#222">5</div>
<div class="a" style="left:26px;top:315px;width:1230px;height:1px;background:#dadcdd"></div>
<div class="a" style="left:0px;top:315px;width:25px;height:1px;background:#b3b7bc"></div>
<div class="t" style="left:0.0px;top:302.69px;font-size:11px;width:24px;text-align:center;color:#222">6</div>
<div class="a" style="left:26px;top:332px;width:1230px;height:1px;background:#dadcdd"></div>
<div class="a" style="left:0px;top:332px;width:25px;height:1px;background:#b3b7bc"></div>
<div class="t" style="left:0.0px;top:319.69px;font-size:11px;width:24px;text-align:center;color:#222">7</div>
<div class="a" style="left:26px;top:349px;width:1230px;height:1px;background:#dadcdd"></div>
<div class="a" style="left:0px;top:349px;width:25px;height:1px;background:#b3b7bc"></div>
<div class="t" style="left:0.0px;top:336.69px;font-size:11px;width:24px;text-align:center;color:#222">8</div>
<div class="a" style="left:26px;top:366px;width:1230px;height:1px;background:#dadcdd"></div>
<div class="a" style="left:0px;top:366px;width:25px;height:1px;background:#b3b7bc"></div>
<div class="t" style="left:0.0px;top:353.69px;font-size:11px;width:24px;text-align:center;color:#222">9</div>
<div class="a" style="left:26px;top:383px;width:1230px;height:1px;background:#dadcdd"></div>
<div class="a" style="left:0px;top:383px;width:25px;height:1px;background:#b3b7bc"></div>
<div class="t" style="left:0.0px;top:370.69px;font-size:11px;width:24px;text-align:center;color:#222">10</div>
<div class="a" style="left:26px;top:400px;width:1230px;height:1px;background:#dadcdd"></div>
<div class="a" style="left:0px;top:400px;width:25px;height:1px;background:#b3b7bc"></div>
<div class="t" style="left:0.0px;top:387.69px;font-size:11px;width:24px;text-align:center;color:#222">11</div>
<div class="a" style="left:26px;top:417px;width:1230px;height:1px;background:#dadcdd"></div>
<div class="a" style="left:0px;top:417px;width:25px;height:1px;background:#b3b7bc"></div>
<div class="t" style="left:0.0px;top:404.69px;font-size:11px;width:24px;text-align:center;color:#222">12</div>
<div class="a" style="left:26px;top:434px;width:1230px;height:1px;background:#dadcdd"></div>
<div class="a" style="left:0px;top:434px;width:25px;height:1px;background:#b3b7bc"></div>
<div class="t" style="left:0.0px;top:421.69px;font-size:11px;width:24px;text-align:center;color:#222">13</div>
<div class="a" style="left:26px;top:451px;width:1230px;height:1px;background:#dadcdd"></div>
<div class="a" style="left:0px;top:451px;width:25px;height:1px;background:#b3b7bc"></div>
<div class="t" style="left:0.0px;top:438.69px;font-size:11px;width:24px;text-align:center;color:#222">14</div>
<div class="a" style="left:26px;top:468px;width:1230px;height:1px;background:#dadcdd"></div>
<div class="a" style="left:0px;top:468px;width:25px;height:1px;background:#b3b7bc"></div>
<div class="t" style="left:0.0px;top:455.69px;font-size:11px;width:24px;text-align:center;color:#222">15</div>
<div class="a" style="left:26px;top:485px;width:1230px;height:1px;background:#dadcdd"></div>
<div class="a" style="left:0px;top:485px;width:25px;height:1px;background:#b3b7bc"></div>
<div class="t" style="left:0.0px;top:472.69px;font-size:11px;width:24px;text-align:center;color:#222">16</div>
<div class="a" style="left:26px;top:502px;width:1230px;height:1px;background:#dadcdd"></div>
<div class="a" style="left:0px;top:486px;width:25px;height:16px;background:linear-gradient(90deg,#fde4a8,#f6c85e)"></div>
<div class="a" style="left:0px;top:502px;width:25px;height:1px;background:#b3b7bc"></div>
<div class="t" style="left:0.0px;top:489.69px;font-size:11px;width:24px;text-align:center;color:#222">17</div>
<div class="a" style="left:26px;top:519px;width:1230px;height:1px;background:#dadcdd"></div>
<div class="a" style="left:0px;top:519px;width:25px;height:1px;background:#b3b7bc"></div>
<div class="t" style="left:0.0px;top:506.69px;font-size:11px;width:24px;text-align:center;color:#222">18</div>
<div class="a" style="left:26px;top:536px;width:1230px;height:1px;background:#dadcdd"></div>
<div class="a" style="left:0px;top:536px;width:25px;height:1px;background:#b3b7bc"></div>
<div class="t" style="left:0.0px;top:523.69px;font-size:11px;width:24px;text-align:center;color:#222">19</div>
<div class="a" style="left:26px;top:553px;width:1230px;height:1px;background:#dadcdd"></div>
<div class="a" style="left:0px;top:553px;width:25px;height:1px;background:#b3b7bc"></div>
<div class="t" style="left:0.0px;top:540.69px;font-size:11px;width:24px;text-align:center;color:#222">20</div>
<div class="a" style="left:26px;top:570px;width:1230px;height:1px;background:#dadcdd"></div>
<div class="a" style="left:0px;top:570px;width:25px;height:1px;background:#b3b7bc"></div>
<div class="t" style="left:0.0px;top:557.69px;font-size:11px;width:24px;text-align:center;color:#222">21</div>
<div class="a" style="left:26px;top:587px;width:1230px;height:1px;background:#dadcdd"></div>
<div class="a" style="left:0px;top:587px;width:25px;height:1px;background:#b3b7bc"></div>
<div class="t" style="left:0.0px;top:574.69px;font-size:11px;width:24px;text-align:center;color:#222">22</div>
<div class="a" style="left:26px;top:604px;width:1230px;height:1px;background:#dadcdd"></div>
<div class="a" style="left:0px;top:604px;width:25px;height:1px;background:#b3b7bc"></div>
<div class="t" style="left:0.0px;top:591.69px;font-size:11px;width:24px;text-align:center;color:#222">23</div>
<div class="a" style="left:26px;top:621px;width:1230px;height:1px;background:#dadcdd"></div>
<div class="a" style="left:0px;top:621px;width:25px;height:1px;background:#b3b7bc"></div>
<div class="t" style="left:0.0px;top:608.69px;font-size:11px;width:24px;text-align:center;color:#222">24</div>
<div class="a" style="left:26px;top:638px;width:1230px;height:1px;background:#dadcdd"></div>
<div class="a" style="left:0px;top:638px;width:25px;height:1px;background:#b3b7bc"></div>
<div class="t" style="left:0.0px;top:625.69px;font-size:11px;width:24px;text-align:center;color:#222">25</div>
<div class="a" style="left:26px;top:655px;width:1230px;height:1px;background:#dadcdd"></div>
<div class="a" style="left:0px;top:655px;width:25px;height:1px;background:#b3b7bc"></div>
<div class="t" style="left:0.0px;top:642.69px;font-size:11px;width:24px;text-align:center;color:#222">26</div>
<div class="a" style="left:26px;top:672px;width:1230px;height:1px;background:#dadcdd"></div>
<div class="a" style="left:0px;top:672px;width:25px;height:1px;background:#b3b7bc"></div>
<div class="t" style="left:0.0px;top:659.69px;font-size:11px;width:24px;text-align:center;color:#222">27</div>
<div class="a" style="left:26px;top:689px;width:1230px;height:1px;background:#dadcdd"></div>
<div class="a" style="left:0px;top:689px;width:25px;height:1px;background:#b3b7bc"></div>
<div class="t" style="left:0.0px;top:676.69px;font-size:11px;width:24px;text-align:center;color:#222">28</div>
<div class="a" style="left:26px;top:706px;width:1230px;height:1px;background:#dadcdd"></div>
<div class="a" style="left:0px;top:706px;width:25px;height:1px;background:#b3b7bc"></div>
<div class="t" style="left:0.0px;top:693.69px;font-size:11px;width:24px;text-align:center;color:#222">29</div>
<div class="a" style="left:26px;top:723px;width:1230px;height:1px;background:#dadcdd"></div>
<div class="a" style="left:0px;top:723px;width:25px;height:1px;background:#b3b7bc"></div>
<div class="t" style="left:0.0px;top:710.69px;font-size:11px;width:24px;text-align:center;color:#222">30</div>
<div class="a" style="left:26px;top:740px;width:1230px;height:1px;background:#dadcdd"></div>
<div class="a" style="left:0px;top:740px;width:25px;height:1px;background:#b3b7bc"></div>
<div class="t" style="left:0.0px;top:727.69px;font-size:11px;width:24px;text-align:center;color:#222">31</div>
<div class="a" style="left:26px;top:757px;width:1230px;height:1px;background:#dadcdd"></div>
<div class="a" style="left:0px;top:757px;width:25px;height:1px;background:#b3b7bc"></div>
<div class="t" style="left:0.0px;top:744.69px;font-size:11px;width:24px;text-align:center;color:#222">32</div>
<div class="a" style="left:26px;top:774px;width:1230px;height:1px;background:#dadcdd"></div>
<div class="a" style="left:0px;top:774px;width:25px;height:1px;background:#b3b7bc"></div>
<div class="t" style="left:0.0px;top:761.69px;font-size:11px;width:24px;text-align:center;color:#222">33</div>
<div class="a" style="left:26px;top:791px;width:1230px;height:1px;background:#dadcdd"></div>
<div class="a" style="left:0px;top:791px;width:25px;height:1px;background:#b3b7bc"></div>
<div class="t" style="left:0.0px;top:778.69px;font-size:11px;width:24px;text-align:center;color:#222">34</div>
<div class="a" style="left:26px;top:808px;width:1230px;height:1px;background:#dadcdd"></div>
<div class="a" style="left:0px;top:808px;width:25px;height:1px;background:#b3b7bc"></div>
<div class="t" style="left:0.0px;top:795.69px;font-size:11px;width:24px;text-align:center;color:#222">35</div>
<div class="a" style="left:26px;top:825px;width:1230px;height:1px;background:#dadcdd"></div>
<div class="a" style="left:0px;top:825px;width:25px;height:1px;background:#b3b7bc"></div>
<div class="t" style="left:0.0px;top:812.69px;font-size:11px;width:24px;text-align:center;color:#222">36</div>
<div class="a" style="left:26px;top:842px;width:1230px;height:1px;background:#dadcdd"></div>
<div class="a" style="left:0px;top:842px;width:25px;height:1px;background:#b3b7bc"></div>
<div class="t" style="left:0.0px;top:829.69px;font-size:11px;width:24px;text-align:center;color:#222">37</div>
<div class="a" style="left:26px;top:859px;width:1230px;height:1px;background:#dadcdd"></div>
<div class="a" style="left:0px;top:859px;width:25px;height:1px;background:#b3b7bc"></div>
<div class="t" style="left:0.0px;top:846.69px;font-size:11px;width:24px;text-align:center;color:#222">38</div>
<div class="a" style="left:26px;top:876px;width:1230px;height:1px;background:#dadcdd"></div>
<div class="a" style="left:0px;top:876px;width:25px;height:1px;background:#b3b7bc"></div>
<div class="t" style="left:0.0px;top:863.69px;font-size:11px;width:24px;text-align:center;color:#222">39</div>
<div class="a" style="left:26px;top:893px;width:1230px;height:1px;background:#dadcdd"></div>
<div class="a" style="left:0px;top:893px;width:25px;height:1px;background:#b3b7bc"></div>
<div class="t" style="left:0.0px;top:880.69px;font-size:11px;width:24px;text-align:center;color:#222">40</div>
<div class="a" style="left:26px;top:910px;width:1230px;height:1px;background:#dadcdd"></div>
<div class="a" style="left:0px;top:910px;width:25px;height:1px;background:#b3b7bc"></div>
<div class="t" style="left:0.0px;top:897.69px;font-size:11px;width:24px;text-align:center;color:#222">41</div>
<div class="a" style="left:26px;top:927px;width:1230px;height:1px;background:#dadcdd"></div>
<div class="a" style="left:0px;top:927px;width:25px;height:1px;background:#b3b7bc"></div>
<div class="t" style="left:0.0px;top:914.69px;font-size:11px;width:24px;text-align:center;color:#222">42</div>
<div class="a" style="left:137px;top:247px;width:58px;height:18px;background:#fff;border:1px solid #000"></div>
<div class="t" style="left:137.0px;top:251.18px;font-size:11.6px;width:57px;text-align:center;color:#000;font-weight:bold">Nbsim V</div>
<div class="a" style="left:194px;top:247px;width:62px;height:18px;background:#fff;border:1px solid #000"></div>
<div class="t" style="left:194.0px;top:251.18px;font-size:11.6px;width:61px;text-align:center;color:#000;font-weight:bold">Lambda</div>
<div class="a" style="left:255px;top:247px;width:68px;height:18px;background:#fff;border:1px solid #000"></div>
<div class="t" style="left:255.0px;top:251.18px;font-size:11.6px;width:67px;text-align:center;color:#000;font-weight:bold">AFR</div>
<div class="a" style="left:137px;top:264px;width:58px;height:18px;background:#fff;border:1px solid #000"></div>
<div class="t" style="left:137.0px;top:268.69px;font-size:11px;width:55px;text-align:right;color:#000;letter-spacing:0.68px">0.8803</div>
<div class="a" style="left:194px;top:264px;width:62px;height:18px;background:#fff;border:1px solid #000"></div>
<div class="t" style="left:194.0px;top:268.69px;font-size:11px;width:59px;text-align:right;color:#000;letter-spacing:0.68px">0.6091</div>
<div class="a" style="left:255px;top:264px;width:68px;height:18px;background:#fff;border:1px solid #000"></div>
<div class="t" style="left:255.0px;top:268.69px;font-size:11px;width:65px;text-align:right;color:#000;letter-spacing:0.68px">8.9500</div>
<div class="a" style="left:137px;top:281px;width:58px;height:18px;background:#fff;border:1px solid #000"></div>
<div class="t" style="left:137.0px;top:285.69px;font-size:11px;width:55px;text-align:right;color:#000;letter-spacing:0.68px">0.8791</div>
<div class="a" style="left:194px;top:281px;width:62px;height:18px;background:#fff;border:1px solid #000"></div>
<div class="t" style="left:194.0px;top:285.69px;font-size:11px;width:59px;text-align:right;color:#000;letter-spacing:0.68px">0.6194</div>
<div class="a" style="left:255px;top:281px;width:68px;height:18px;background:#fff;border:1px solid #000"></div>
<div class="t" style="left:255.0px;top:285.69px;font-size:11px;width:65px;text-align:right;color:#000;letter-spacing:0.68px">9.1100</div>
<div class="a" style="left:137px;top:298px;width:58px;height:18px;background:#fff;border:1px solid #000"></div>
<div class="t" style="left:137.0px;top:302.69px;font-size:11px;width:55px;text-align:right;color:#000;letter-spacing:0.68px">0.8791</div>
<div class="a" style="left:194px;top:298px;width:62px;height:18px;background:#fff;border:1px solid #000"></div>
<div class="t" style="left:194.0px;top:302.69px;font-size:11px;width:59px;text-align:right;color:#000;letter-spacing:0.68px">0.6298</div>
<div class="a" style="left:255px;top:298px;width:68px;height:18px;background:#fff;border:1px solid #000"></div>
<div class="t" style="left:255.0px;top:302.69px;font-size:11px;width:65px;text-align:right;color:#000;letter-spacing:0.68px">9.2600</div>
<div class="a" style="left:137px;top:315px;width:58px;height:18px;background:#fff;border:1px solid #000"></div>
<div class="t" style="left:137.0px;top:319.69px;font-size:11px;width:55px;text-align:right;color:#000;letter-spacing:0.68px">0.8779</div>
<div class="a" style="left:194px;top:315px;width:62px;height:18px;background:#fff;border:1px solid #000"></div>
<div class="t" style="left:194.0px;top:319.69px;font-size:11px;width:59px;text-align:right;color:#000;letter-spacing:0.68px">0.6401</div>
<div class="a" style="left:255px;top:315px;width:68px;height:18px;background:#fff;border:1px solid #000"></div>
<div class="t" style="left:255.0px;top:319.69px;font-size:11px;width:65px;text-align:right;color:#000;letter-spacing:0.68px">9.4100</div>
<div class="a" style="left:137px;top:332px;width:58px;height:18px;background:#fff;border:1px solid #000"></div>
<div class="t" style="left:137.0px;top:336.69px;font-size:11px;width:55px;text-align:right;color:#000;letter-spacing:0.68px">0.8779</div>
<div class="a" style="left:194px;top:332px;width:62px;height:18px;background:#fff;border:1px solid #000"></div>
<div class="t" style="left:194.0px;top:336.69px;font-size:11px;width:59px;text-align:right;color:#000;letter-spacing:0.68px">0.6505</div>
<div class="a" style="left:255px;top:332px;width:68px;height:18px;background:#fff;border:1px solid #000"></div>
<div class="t" style="left:255.0px;top:336.69px;font-size:11px;width:65px;text-align:right;color:#000;letter-spacing:0.68px">9.5600</div>
<div class="a" style="left:137px;top:349px;width:58px;height:18px;background:#fff;border:1px solid #000"></div>
<div class="t" style="left:137.0px;top:353.69px;font-size:11px;width:55px;text-align:right;color:#000;letter-spacing:0.68px">0.8767</div>
<div class="a" style="left:194px;top:349px;width:62px;height:18px;background:#fff;border:1px solid #000"></div>
<div class="t" style="left:194.0px;top:353.69px;font-size:11px;width:59px;text-align:right;color:#000;letter-spacing:0.68px">0.6608</div>
<div class="a" style="left:255px;top:349px;width:68px;height:18px;background:#fff;border:1px solid #000"></div>
<div class="t" style="left:255.0px;top:353.69px;font-size:11px;width:65px;text-align:right;color:#000;letter-spacing:0.68px">9.7100</div>
<div class="a" style="left:137px;top:366px;width:58px;height:18px;background:#fff;border:1px solid #000"></div>
<div class="t" style="left:137.0px;top:370.69px;font-size:11px;width:55px;text-align:right;color:#000;letter-spacing:0.68px">0.8767</div>
<div class="a" style="left:194px;top:366px;width:62px;height:18px;background:#fff;border:1px solid #000"></div>
<div class="t" style="left:194.0px;top:370.69px;font-size:11px;width:59px;text-align:right;color:#000;letter-spacing:0.68px">0.6712</div>
<div class="a" style="left:255px;top:366px;width:68px;height:18px;background:#fff;border:1px solid #000"></div>
<div class="t" style="left:255.0px;top:370.69px;font-size:11px;width:65px;text-align:right;color:#000;letter-spacing:0.68px">9.8700</div>
<div class="a" style="left:137px;top:383px;width:58px;height:18px;background:#fff;border:1px solid #000"></div>
<div class="t" style="left:137.0px;top:387.69px;font-size:11px;width:55px;text-align:right;color:#000;letter-spacing:0.68px">0.8767</div>
<div class="a" style="left:194px;top:383px;width:62px;height:18px;background:#fff;border:1px solid #000"></div>
<div class="t" style="left:194.0px;top:387.69px;font-size:11px;width:59px;text-align:right;color:#000;letter-spacing:0.68px">0.6815</div>
<div class="a" style="left:255px;top:383px;width:68px;height:18px;background:#fff;border:1px solid #000"></div>
<div class="t" style="left:255.0px;top:387.69px;font-size:11px;width:65px;text-align:right;color:#000;letter-spacing:0.68px">10.0200</div>
<div class="a" style="left:137px;top:400px;width:58px;height:18px;background:#fff;border:1px solid #000"></div>
<div class="t" style="left:137.0px;top:404.69px;font-size:11px;width:55px;text-align:right;color:#000;letter-spacing:0.68px">0.8755</div>
<div class="a" style="left:194px;top:400px;width:62px;height:18px;background:#fff;border:1px solid #000"></div>
<div class="t" style="left:194.0px;top:404.69px;font-size:11px;width:59px;text-align:right;color:#000;letter-spacing:0.68px">0.6919</div>
<div class="a" style="left:255px;top:400px;width:68px;height:18px;background:#fff;border:1px solid #000"></div>
<div class="t" style="left:255.0px;top:404.69px;font-size:11px;width:65px;text-align:right;color:#000;letter-spacing:0.68px">10.1700</div>
<div class="a" style="left:137px;top:417px;width:58px;height:18px;background:#fff;border:1px solid #000"></div>
<div class="t" style="left:137.0px;top:421.69px;font-size:11px;width:55px;text-align:right;color:#000;letter-spacing:0.68px">0.8755</div>
<div class="a" style="left:194px;top:417px;width:62px;height:18px;background:#fff;border:1px solid #000"></div>
<div class="t" style="left:194.0px;top:421.69px;font-size:11px;width:59px;text-align:right;color:#000;letter-spacing:0.68px">0.7022</div>
<div class="a" style="left:255px;top:417px;width:68px;height:18px;background:#fff;border:1px solid #000"></div>
<div class="t" style="left:255.0px;top:421.69px;font-size:11px;width:65px;text-align:right;color:#000;letter-spacing:0.68px">10.3200</div>
<div class="a" style="left:137px;top:434px;width:58px;height:18px;background:#fff;border:1px solid #000"></div>
<div class="t" style="left:137.0px;top:438.69px;font-size:11px;width:55px;text-align:right;color:#000;letter-spacing:0.68px">0.8742</div>
<div class="a" style="left:194px;top:434px;width:62px;height:18px;background:#fff;border:1px solid #000"></div>
<div class="t" style="left:194.0px;top:438.69px;font-size:11px;width:59px;text-align:right;color:#000;letter-spacing:0.68px">0.7126</div>
<div class="a" style="left:255px;top:434px;width:68px;height:18px;background:#fff;border:1px solid #000"></div>
<div class="t" style="left:255.0px;top:438.69px;font-size:11px;width:65px;text-align:right;color:#000;letter-spacing:0.68px">10.4700</div>
<div class="a" style="left:137px;top:451px;width:58px;height:18px;background:#fff;border:1px solid #000"></div>
<div class="t" style="left:137.0px;top:455.69px;font-size:11px;width:55px;text-align:right;color:#000;letter-spacing:0.68px">0.8742</div>
<div class="a" style="left:194px;top:451px;width:62px;height:18px;background:#fff;border:1px solid #000"></div>
<div class="t" style="left:194.0px;top:455.69px;font-size:11px;width:59px;text-align:right;color:#000;letter-spacing:0.68px">0.7229</div>
<div class="a" style="left:255px;top:451px;width:68px;height:18px;background:#fff;border:1px solid #000"></div>
<div class="t" style="left:255.0px;top:455.69px;font-size:11px;width:65px;text-align:right;color:#000;letter-spacing:0.68px">10.6300</div>
<div class="a" style="left:137px;top:468px;width:58px;height:18px;background:#fff;border:1px solid #000"></div>
<div class="t" style="left:137.0px;top:472.69px;font-size:11px;width:55px;text-align:right;color:#000;letter-spacing:0.68px">0.8730</div>
<div class="a" style="left:194px;top:468px;width:62px;height:18px;background:#fff;border:1px solid #000"></div>
<div class="t" style="left:194.0px;top:472.69px;font-size:11px;width:59px;text-align:right;color:#000;letter-spacing:0.68px">0.7333</div>
<div class="a" style="left:255px;top:468px;width:68px;height:18px;background:#fff;border:1px solid #000"></div>
<div class="t" style="left:255.0px;top:472.69px;font-size:11px;width:65px;text-align:right;color:#000;letter-spacing:0.68px">10.7800</div>
<div class="a" style="left:137px;top:485px;width:58px;height:18px;background:#fff;border:1px solid #000"></div>
<div class="t" style="left:137.0px;top:489.69px;font-size:11px;width:55px;text-align:right;color:#000;letter-spacing:0.68px">0.8730</div>
<div class="a" style="left:194px;top:485px;width:62px;height:18px;background:#fff;border:1px solid #000"></div>
<div class="t" style="left:194.0px;top:489.69px;font-size:11px;width:59px;text-align:right;color:#000;letter-spacing:0.68px">0.7436</div>
<div class="a" style="left:255px;top:485px;width:68px;height:18px;background:#fff;border:1px solid #000"></div>
<div class="t" style="left:255.0px;top:489.69px;font-size:11px;width:65px;text-align:right;color:#000;letter-spacing:0.68px">10.9300</div>
<div class="a" style="left:137px;top:502px;width:58px;height:18px;background:#fff;border:1px solid #000"></div>
<div class="t" style="left:137.0px;top:506.69px;font-size:11px;width:55px;text-align:right;color:#000;letter-spacing:0.68px">0.8730</div>
<div class="a" style="left:194px;top:502px;width:62px;height:18px;background:#fff;border:1px solid #000"></div>
<div class="t" style="left:194.0px;top:506.69px;font-size:11px;width:59px;text-align:right;color:#000;letter-spacing:0.68px">0.7540</div>
<div class="a" style="left:255px;top:502px;width:68px;height:18px;background:#fff;border:1px solid #000"></div>
<div class="t" style="left:255.0px;top:506.69px;font-size:11px;width:65px;text-align:right;color:#000;letter-spacing:0.68px">11.0800</div>
<div class="a" style="left:137px;top:519px;width:58px;height:18px;background:#fff;border:1px solid #000"></div>
<div class="t" style="left:137.0px;top:523.69px;font-size:11px;width:55px;text-align:right;color:#000;letter-spacing:0.68px">0.8718</div>
<div class="a" style="left:194px;top:519px;width:62px;height:18px;background:#fff;border:1px solid #000"></div>
<div class="t" style="left:194.0px;top:523.69px;font-size:11px;width:59px;text-align:right;color:#000;letter-spacing:0.68px">0.7643</div>
<div class="a" style="left:255px;top:519px;width:68px;height:18px;background:#fff;border:1px solid #000"></div>
<div class="t" style="left:255.0px;top:523.69px;font-size:11px;width:65px;text-align:right;color:#000;letter-spacing:0.68px">11.2400</div>
<div class="a" style="left:137px;top:536px;width:58px;height:18px;background:#fff;border:1px solid #000"></div>
<div class="t" style="left:137.0px;top:540.69px;font-size:11px;width:55px;text-align:right;color:#000;letter-spacing:0.68px">0.8718</div>
<div class="a" style="left:194px;top:536px;width:62px;height:18px;background:#fff;border:1px solid #000"></div>
<div class="t" style="left:194.0px;top:540.69px;font-size:11px;width:59px;text-align:right;color:#000;letter-spacing:0.68px">0.7747</div>
<div class="a" style="left:255px;top:536px;width:68px;height:18px;background:#fff;border:1px solid #000"></div>
<div class="t" style="left:255.0px;top:540.69px;font-size:11px;width:65px;text-align:right;color:#000;letter-spacing:0.68px">11.3900</div>
<div class="a" style="left:137px;top:553px;width:58px;height:18px;background:#fff;border:1px solid #000"></div>
<div class="t" style="left:137.0px;top:557.69px;font-size:11px;width:55px;text-align:right;color:#000;letter-spacing:0.68px">0.8706</div>
<div class="a" style="left:194px;top:553px;width:62px;height:18px;background:#fff;border:1px solid #000"></div>
<div class="t" style="left:194.0px;top:557.69px;font-size:11px;width:59px;text-align:right;color:#000;letter-spacing:0.68px">0.7850</div>
<div class="a" style="left:255px;top:553px;width:68px;height:18px;background:#fff;border:1px solid #000"></div>
<div class="t" style="left:255.0px;top:557.69px;font-size:11px;width:65px;text-align:right;color:#000;letter-spacing:0.68px">11.5400</div>
<div class="a" style="left:137px;top:570px;width:58px;height:18px;background:#fff;border:1px solid #000"></div>
<div class="t" style="left:137.0px;top:574.69px;font-size:11px;width:55px;text-align:right;color:#000;letter-spacing:0.68px">0.8706</div>
<div class="a" style="left:194px;top:570px;width:62px;height:18px;background:#fff;border:1px solid #000"></div>
<div class="t" style="left:194.0px;top:574.69px;font-size:11px;width:59px;text-align:right;color:#000;letter-spacing:0.68px">0.7954</div>
<div class="a" style="left:255px;top:570px;width:68px;height:18px;background:#fff;border:1px solid #000"></div>
<div class="t" style="left:255.0px;top:574.69px;font-size:11px;width:65px;text-align:right;color:#000;letter-spacing:0.68px">11.6900</div>
<div class="a" style="left:137px;top:587px;width:58px;height:18px;background:#fff;border:1px solid #000"></div>
<div class="t" style="left:137.0px;top:591.69px;font-size:11px;width:55px;text-align:right;color:#000;letter-spacing:0.68px">0.8694</div>
<div class="a" style="left:194px;top:587px;width:62px;height:18px;background:#fff;border:1px solid #000"></div>
<div class="t" style="left:194.0px;top:591.69px;font-size:11px;width:59px;text-align:right;color:#000;letter-spacing:0.68px">0.8069</div>
<div class="a" style="left:255px;top:587px;width:68px;height:18px;background:#fff;border:1px solid #000"></div>
<div class="t" style="left:255.0px;top:591.69px;font-size:11px;width:65px;text-align:right;color:#000;letter-spacing:0.68px">11.8600</div>
<div class="a" style="left:137px;top:604px;width:58px;height:18px;background:#fff;border:1px solid #000"></div>
<div class="t" style="left:137.0px;top:608.69px;font-size:11px;width:55px;text-align:right;color:#000;letter-spacing:0.68px">0.8523</div>
<div class="a" style="left:194px;top:604px;width:62px;height:18px;background:#fff;border:1px solid #000"></div>
<div class="t" style="left:194.0px;top:608.69px;font-size:11px;width:59px;text-align:right;color:#000;letter-spacing:0.68px">0.8193</div>
<div class="a" style="left:255px;top:604px;width:68px;height:18px;background:#fff;border:1px solid #000"></div>
<div class="t" style="left:255.0px;top:608.69px;font-size:11px;width:65px;text-align:right;color:#000;letter-spacing:0.68px">12.0400</div>
<div class="a" style="left:137px;top:621px;width:58px;height:18px;background:#fff;border:1px solid #000"></div>
<div class="t" style="left:137.0px;top:625.69px;font-size:11px;width:55px;text-align:right;color:#000;letter-spacing:0.68px">0.8413</div>
<div class="a" style="left:194px;top:621px;width:62px;height:18px;background:#fff;border:1px solid #000"></div>
<div class="t" style="left:194.0px;top:625.69px;font-size:11px;width:59px;text-align:right;color:#000;letter-spacing:0.68px">0.8318</div>
<div class="a" style="left:255px;top:621px;width:68px;height:18px;background:#fff;border:1px solid #000"></div>
<div class="t" style="left:255.0px;top:625.69px;font-size:11px;width:65px;text-align:right;color:#000;letter-spacing:0.68px">12.2300</div>
<div class="a" style="left:137px;top:638px;width:58px;height:18px;background:#fff;border:1px solid #000"></div>
<div class="t" style="left:137.0px;top:642.69px;font-size:11px;width:55px;text-align:right;color:#000;letter-spacing:0.68px">0.8315</div>
<div class="a" style="left:194px;top:638px;width:62px;height:18px;background:#fff;border:1px solid #000"></div>
<div class="t" style="left:194.0px;top:642.69px;font-size:11px;width:59px;text-align:right;color:#000;letter-spacing:0.68px">0.8428</div>
<div class="a" style="left:255px;top:638px;width:68px;height:18px;background:#fff;border:1px solid #000"></div>
<div class="t" style="left:255.0px;top:642.69px;font-size:11px;width:65px;text-align:right;color:#000;letter-spacing:0.68px">12.3900</div>
<div class="a" style="left:137px;top:655px;width:58px;height:18px;background:#fff;border:1px solid #000"></div>
<div class="t" style="left:137.0px;top:659.69px;font-size:11px;width:55px;text-align:right;color:#000;letter-spacing:0.68px">0.8181</div>
<div class="a" style="left:194px;top:655px;width:62px;height:18px;background:#fff;border:1px solid #000"></div>
<div class="t" style="left:194.0px;top:659.69px;font-size:11px;width:59px;text-align:right;color:#000;letter-spacing:0.68px">0.8582</div>
<div class="a" style="left:255px;top:655px;width:68px;height:18px;background:#fff;border:1px solid #000"></div>
<div class="t" style="left:255.0px;top:659.69px;font-size:11px;width:65px;text-align:right;color:#000;letter-spacing:0.68px">12.6200</div>
<div class="a" style="left:137px;top:672px;width:58px;height:18px;background:#fff;border:1px solid #000"></div>
<div class="t" style="left:137.0px;top:676.69px;font-size:11px;width:55px;text-align:right;color:#000;letter-spacing:0.68px">0.8046</div>
<div class="a" style="left:194px;top:672px;width:62px;height:18px;background:#fff;border:1px solid #000"></div>
<div class="t" style="left:194.0px;top:676.69px;font-size:11px;width:59px;text-align:right;color:#000;letter-spacing:0.68px">0.8727</div>
<div class="a" style="left:255px;top:672px;width:68px;height:18px;background:#fff;border:1px solid #000"></div>
<div class="t" style="left:255.0px;top:676.69px;font-size:11px;width:65px;text-align:right;color:#000;letter-spacing:0.68px">12.8300</div>
<div class="a" style="left:137px;top:689px;width:58px;height:18px;background:#fff;border:1px solid #000"></div>
<div class="t" style="left:137.0px;top:693.69px;font-size:11px;width:55px;text-align:right;color:#000;letter-spacing:0.68px">0.7924</div>
<div class="a" style="left:194px;top:689px;width:62px;height:18px;background:#fff;border:1px solid #000"></div>
<div class="t" style="left:194.0px;top:693.69px;font-size:11px;width:59px;text-align:right;color:#000;letter-spacing:0.68px">0.8861</div>
<div class="a" style="left:255px;top:689px;width:68px;height:18px;background:#fff;border:1px solid #000"></div>
<div class="t" style="left:255.0px;top:693.69px;font-size:11px;width:65px;text-align:right;color:#000;letter-spacing:0.68px">13.0300</div>
<div class="a" style="left:137px;top:706px;width:58px;height:18px;background:#fff;border:1px solid #000"></div>
<div class="t" style="left:137.0px;top:710.69px;font-size:11px;width:55px;text-align:right;color:#000;letter-spacing:0.68px">0.7790</div>
<div class="a" style="left:194px;top:706px;width:62px;height:18px;background:#fff;border:1px solid #000"></div>
<div class="t" style="left:194.0px;top:710.69px;font-size:11px;width:59px;text-align:right;color:#000;letter-spacing:0.68px">0.8987</div>
<div class="a" style="left:255px;top:706px;width:68px;height:18px;background:#fff;border:1px solid #000"></div>
<div class="t" style="left:255.0px;top:710.69px;font-size:11px;width:65px;text-align:right;color:#000;letter-spacing:0.68px">13.2100</div>
<div class="a" style="left:137px;top:723px;width:58px;height:18px;background:#fff;border:1px solid #000"></div>
<div class="t" style="left:137.0px;top:727.69px;font-size:11px;width:55px;text-align:right;color:#000;letter-spacing:0.68px">0.7631</div>
<div class="a" style="left:194px;top:723px;width:62px;height:18px;background:#fff;border:1px solid #000"></div>
<div class="t" style="left:194.0px;top:727.69px;font-size:11px;width:59px;text-align:right;color:#000;letter-spacing:0.68px">0.9113</div>
<div class="a" style="left:255px;top:723px;width:68px;height:18px;background:#fff;border:1px solid #000"></div>
<div class="t" style="left:255.0px;top:727.69px;font-size:11px;width:65px;text-align:right;color:#000;letter-spacing:0.68px">13.4000</div>
<div class="a" style="left:137px;top:740px;width:58px;height:18px;background:#fff;border:1px solid #000"></div>
<div class="t" style="left:137.0px;top:744.69px;font-size:11px;width:55px;text-align:right;color:#000;letter-spacing:0.68px">0.7411</div>
<div class="a" style="left:194px;top:740px;width:62px;height:18px;background:#fff;border:1px solid #000"></div>
<div class="t" style="left:194.0px;top:744.69px;font-size:11px;width:59px;text-align:right;color:#000;letter-spacing:0.68px">0.9247</div>
<div class="a" style="left:255px;top:740px;width:68px;height:18px;background:#fff;border:1px solid #000"></div>
<div class="t" style="left:255.0px;top:744.69px;font-size:11px;width:65px;text-align:right;color:#000;letter-spacing:0.68px">13.5900</div>
<div class="a" style="left:137px;top:757px;width:58px;height:18px;background:#fff;border:1px solid #000"></div>
<div class="t" style="left:137.0px;top:761.69px;font-size:11px;width:55px;text-align:right;color:#000;letter-spacing:0.68px">0.7179</div>
<div class="a" style="left:194px;top:757px;width:62px;height:18px;background:#fff;border:1px solid #000"></div>
<div class="t" style="left:194.0px;top:761.69px;font-size:11px;width:59px;text-align:right;color:#000;letter-spacing:0.68px">0.9403</div>
<div class="a" style="left:255px;top:757px;width:68px;height:18px;background:#fff;border:1px solid #000"></div>
<div class="t" style="left:255.0px;top:761.69px;font-size:11px;width:65px;text-align:right;color:#000;letter-spacing:0.68px">13.8200</div>
<div class="a" style="left:137px;top:774px;width:58px;height:18px;background:#ffff00;border:1px solid #000"></div>
<div class="t" style="left:137.0px;top:778.69px;font-size:11px;width:55px;text-align:right;color:#000;letter-spacing:0.68px">0.6825</div>
<div class="a" style="left:194px;top:774px;width:62px;height:18px;background:#ffff00;border:1px solid #000"></div>
<div class="t" style="left:194.0px;top:778.69px;font-size:11px;width:59px;text-align:right;color:#000;letter-spacing:0.68px">0.9590</div>
<div class="a" style="left:255px;top:774px;width:68px;height:18px;background:#ffff00;border:1px solid #000"></div>
<div class="t" style="left:255.0px;top:778.69px;font-size:11px;width:65px;text-align:right;color:#000;letter-spacing:0.68px">14.1000</div>
<div class="a" style="left:137px;top:791px;width:58px;height:18px;background:#ffff00;border:1px solid #000"></div>
<div class="t" style="left:137.0px;top:795.69px;font-size:11px;width:55px;text-align:right;color:#000;letter-spacing:0.68px">0.6056</div>
<div class="a" style="left:194px;top:791px;width:62px;height:18px;background:#ffff00;border:1px solid #000"></div>
<div class="t" style="left:194.0px;top:795.69px;font-size:11px;width:59px;text-align:right;color:#000;letter-spacing:0.68px">0.9817</div>
<div class="a" style="left:255px;top:791px;width:68px;height:18px;background:#ffff00;border:1px solid #000"></div>
<div class="t" style="left:255.0px;top:795.69px;font-size:11px;width:65px;text-align:right;color:#000;letter-spacing:0.68px">14.4300</div>
<div class="a" style="left:137px;top:808px;width:58px;height:18px;background:#00b050;border:1px solid #000"></div>
<div class="t" style="left:137.0px;top:812.69px;font-size:11px;width:55px;text-align:right;color:#000;letter-spacing:0.68px">0.2308</div>
<div class="a" style="left:194px;top:808px;width:62px;height:18px;background:#00b050;border:1px solid #000"></div>
<div class="t" style="left:194.0px;top:812.69px;font-size:11px;width:59px;text-align:right;color:#000;letter-spacing:0.68px">1.0090</div>
<div class="a" style="left:255px;top:808px;width:68px;height:18px;background:#00b050;border:1px solid #000"></div>
<div class="t" style="left:255.0px;top:812.69px;font-size:11px;width:65px;text-align:right;color:#000;letter-spacing:0.68px">14.8300</div>
<div class="a" style="left:854px;top:247px;width:83px;height:18px;background:#fff;border:1px solid #000"></div>
<div class="t" style="left:854.0px;top:251.18px;font-size:11.6px;width:82px;text-align:center;color:#000;font-weight:bold">Nbsim V</div>
<div class="a" style="left:936px;top:247px;width:60px;height:18px;background:#fff;border:1px solid #000"></div>
<div class="t" style="left:936.0px;top:251.18px;font-size:11.6px;width:59px;text-align:center;color:#000;font-weight:bold">Lambda</div>
<div class="a" style="left:995px;top:247px;width:67px;height:18px;background:#fff;border:1px solid #000"></div>
<div class="t" style="left:995.0px;top:251.18px;font-size:11.6px;width:66px;text-align:center;color:#000;font-weight:bold">AFR</div>
<div class="a" style="left:854px;top:264px;width:83px;height:18px;background:#00b050;border:1px solid #000"></div>
<div class="t" style="left:854.0px;top:268.69px;font-size:11px;width:80px;text-align:right;color:#000;letter-spacing:0.68px">0.2308</div>
<div class="a" style="left:936px;top:264px;width:60px;height:18px;background:#00b050;border:1px solid #000"></div>
<div class="t" style="left:936.0px;top:268.69px;font-size:11px;width:57px;text-align:right;color:#000;letter-spacing:0.68px">1.0090</div>
<div class="a" style="left:995px;top:264px;width:67px;height:18px;background:#00b050;border:1px solid #000"></div>
<div class="t" style="left:995.0px;top:268.69px;font-size:11px;width:64px;text-align:right;color:#000;letter-spacing:0.68px">14.8300</div>
<div class="a" style="left:854px;top:281px;width:83px;height:18px;background:#ffff00;border:1px solid #000"></div>
<div class="t" style="left:854.0px;top:285.69px;font-size:11px;width:80px;text-align:right;color:#000;letter-spacing:0.68px">0.1709</div>
<div class="a" style="left:936px;top:281px;width:60px;height:18px;background:#ffff00;border:1px solid #000"></div>
<div class="t" style="left:936.0px;top:285.69px;font-size:11px;width:57px;text-align:right;color:#000;letter-spacing:0.68px">1.0412</div>
<div class="a" style="left:995px;top:281px;width:67px;height:18px;background:#ffff00;border:1px solid #000"></div>
<div class="t" style="left:995.0px;top:285.69px;font-size:11px;width:64px;text-align:right;color:#000;letter-spacing:0.68px">15.3100</div>
<div class="a" style="left:854px;top:298px;width:83px;height:18px;background:#ffff00;border:1px solid #000"></div>
<div class="t" style="left:854.0px;top:302.69px;font-size:11px;width:80px;text-align:right;color:#000;letter-spacing:0.68px">0.1074</div>
<div class="a" style="left:936px;top:298px;width:60px;height:18px;background:#ffff00;border:1px solid #000"></div>
<div class="t" style="left:936.0px;top:302.69px;font-size:11px;width:57px;text-align:right;color:#000;letter-spacing:0.68px">1.0784</div>
<div class="a" style="left:995px;top:298px;width:67px;height:18px;background:#ffff00;border:1px solid #000"></div>
<div class="t" style="left:995.0px;top:302.69px;font-size:11px;width:64px;text-align:right;color:#000;letter-spacing:0.68px">15.8500</div>
<div class="a" style="left:854px;top:315px;width:83px;height:18px;background:#fff;border:1px solid #000"></div>
<div class="t" style="left:854.0px;top:319.69px;font-size:11px;width:80px;text-align:right;color:#000;letter-spacing:0.68px">0.0635</div>
<div class="a" style="left:936px;top:315px;width:60px;height:18px;background:#fff;border:1px solid #000"></div>
<div class="t" style="left:936.0px;top:319.69px;font-size:11px;width:57px;text-align:right;color:#000;letter-spacing:0.68px">1.1204</div>
<div class="a" style="left:995px;top:315px;width:67px;height:18px;background:#fff;border:1px solid #000"></div>
<div class="t" style="left:995.0px;top:319.69px;font-size:11px;width:64px;text-align:right;color:#000;letter-spacing:0.68px">16.4700</div>
<div class="a" style="left:854px;top:332px;width:83px;height:18px;background:#fff;border:1px solid #000"></div>
<div class="t" style="left:854.0px;top:336.69px;font-size:11px;width:80px;text-align:right;color:#000;letter-spacing:0.68px">0.0501</div>
<div class="a" style="left:936px;top:332px;width:60px;height:18px;background:#fff;border:1px solid #000"></div>
<div class="t" style="left:936.0px;top:336.69px;font-size:11px;width:57px;text-align:right;color:#000;letter-spacing:0.68px">1.1669</div>
<div class="a" style="left:995px;top:332px;width:67px;height:18px;background:#fff;border:1px solid #000"></div>
<div class="t" style="left:995.0px;top:336.69px;font-size:11px;width:64px;text-align:right;color:#000;letter-spacing:0.68px">17.1500</div>
<div class="a" style="left:854px;top:349px;width:83px;height:18px;background:#fff;border:1px solid #000"></div>
<div class="t" style="left:854.0px;top:353.69px;font-size:11px;width:80px;text-align:right;color:#000;letter-spacing:0.68px">0.0379</div>
<div class="a" style="left:936px;top:349px;width:60px;height:18px;background:#fff;border:1px solid #000"></div>
<div class="t" style="left:936.0px;top:353.69px;font-size:11px;width:57px;text-align:right;color:#000;letter-spacing:0.68px">1.2176</div>
<div class="a" style="left:995px;top:349px;width:67px;height:18px;background:#fff;border:1px solid #000"></div>
<div class="t" style="left:995.0px;top:353.69px;font-size:11px;width:64px;text-align:right;color:#000;letter-spacing:0.68px">17.9000</div>
<div class="a" style="left:854px;top:366px;width:83px;height:18px;background:#fff;border:1px solid #000"></div>
<div class="t" style="left:854.0px;top:370.69px;font-size:11px;width:80px;text-align:right;color:#000;letter-spacing:0.68px">0.0330</div>
<div class="a" style="left:936px;top:366px;width:60px;height:18px;background:#fff;border:1px solid #000"></div>
<div class="t" style="left:936.0px;top:370.69px;font-size:11px;width:57px;text-align:right;color:#000;letter-spacing:0.68px">1.2723</div>
<div class="a" style="left:995px;top:366px;width:67px;height:18px;background:#fff;border:1px solid #000"></div>
<div class="t" style="left:995.0px;top:370.69px;font-size:11px;width:64px;text-align:right;color:#000;letter-spacing:0.68px">18.7000</div>
<div class="a" style="left:854px;top:383px;width:83px;height:18px;background:#fff;border:1px solid #000"></div>
<div class="t" style="left:854.0px;top:387.69px;font-size:11px;width:80px;text-align:right;color:#000;letter-spacing:0.68px">0.0305</div>
<div class="a" style="left:936px;top:383px;width:60px;height:18px;background:#fff;border:1px solid #000"></div>
<div class="t" style="left:936.0px;top:387.69px;font-size:11px;width:57px;text-align:right;color:#000;letter-spacing:0.68px">1.3310</div>
<div class="a" style="left:995px;top:383px;width:67px;height:18px;background:#fff;border:1px solid #000"></div>
<div class="t" style="left:995.0px;top:387.69px;font-size:11px;width:64px;text-align:right;color:#000;letter-spacing:0.68px">19.5700</div>
<div class="a" style="left:854px;top:400px;width:83px;height:18px;background:#fff;border:1px solid #000"></div>
<div class="t" style="left:854.0px;top:404.69px;font-size:11px;width:80px;text-align:right;color:#000;letter-spacing:0.68px">0.0305</div>
<div class="a" style="left:936px;top:400px;width:60px;height:18px;background:#fff;border:1px solid #000"></div>
<div class="t" style="left:936.0px;top:404.69px;font-size:11px;width:57px;text-align:right;color:#000;letter-spacing:0.68px">1.3943</div>
<div class="a" style="left:995px;top:400px;width:67px;height:18px;background:#fff;border:1px solid #000"></div>
<div class="t" style="left:995.0px;top:404.69px;font-size:11px;width:64px;text-align:right;color:#000;letter-spacing:0.68px">20.5000</div>
<div class="a" style="left:854px;top:417px;width:83px;height:18px;background:#fff;border:1px solid #000"></div>
<div class="t" style="left:854.0px;top:421.69px;font-size:11px;width:80px;text-align:right;color:#000;letter-spacing:0.68px">0.0293</div>
<div class="a" style="left:936px;top:417px;width:60px;height:18px;background:#fff;border:1px solid #000"></div>
<div class="t" style="left:936.0px;top:421.69px;font-size:11px;width:57px;text-align:right;color:#000;letter-spacing:0.68px">1.4625</div>
<div class="a" style="left:995px;top:417px;width:67px;height:18px;background:#fff;border:1px solid #000"></div>
<div class="t" style="left:995.0px;top:421.69px;font-size:11px;width:64px;text-align:right;color:#000;letter-spacing:0.68px">21.5000</div>
<div class="a" style="left:854px;top:434px;width:83px;height:18px;background:#fff;border:1px solid #000"></div>
<div class="t" style="left:854.0px;top:438.69px;font-size:11px;width:80px;text-align:right;color:#000;letter-spacing:0.68px">0.0293</div>
<div class="a" style="left:936px;top:434px;width:60px;height:18px;background:#fff;border:1px solid #000"></div>
<div class="t" style="left:936.0px;top:438.69px;font-size:11px;width:57px;text-align:right;color:#000;letter-spacing:0.68px">1.5368</div>
<div class="a" style="left:995px;top:434px;width:67px;height:18px;background:#fff;border:1px solid #000"></div>
<div class="t" style="left:995.0px;top:438.69px;font-size:11px;width:64px;text-align:right;color:#000;letter-spacing:0.68px">22.5900</div>
<div class="a" style="left:854px;top:451px;width:83px;height:18px;background:#fff;border:1px solid #000"></div>
<div class="t" style="left:854.0px;top:455.69px;font-size:11px;width:80px;text-align:right;color:#000;letter-spacing:0.68px">0.0293</div>
<div class="a" style="left:936px;top:451px;width:60px;height:18px;background:#fff;border:1px solid #000"></div>
<div class="t" style="left:936.0px;top:455.69px;font-size:11px;width:57px;text-align:right;color:#000;letter-spacing:0.68px">1.6180</div>
<div class="a" style="left:995px;top:451px;width:67px;height:18px;background:#fff;border:1px solid #000"></div>
<div class="t" style="left:995.0px;top:455.69px;font-size:11px;width:64px;text-align:right;color:#000;letter-spacing:0.68px">23.7800</div>
<div class="a" style="left:854px;top:468px;width:83px;height:18px;background:#fff;border:1px solid #000"></div>
<div class="t" style="left:854.0px;top:472.69px;font-size:11px;width:80px;text-align:right;color:#000;letter-spacing:0.68px">0.0293</div>
<div class="a" style="left:936px;top:468px;width:60px;height:18px;background:#fff;border:1px solid #000"></div>
<div class="t" style="left:936.0px;top:472.69px;font-size:11px;width:57px;text-align:right;color:#000;letter-spacing:0.68px">1.7073</div>
<div class="a" style="left:995px;top:468px;width:67px;height:18px;background:#fff;border:1px solid #000"></div>
<div class="t" style="left:995.0px;top:472.69px;font-size:11px;width:64px;text-align:right;color:#000;letter-spacing:0.68px">25.1000</div>
<div class="a" style="left:854px;top:485px;width:83px;height:18px;background:#fff;border:1px solid #000"></div>
<div class="t" style="left:854.0px;top:489.69px;font-size:11px;width:80px;text-align:right;color:#000;letter-spacing:0.68px">0.0293</div>
<div class="a" style="left:936px;top:485px;width:60px;height:18px;background:#fff;border:1px solid #000"></div>
<div class="t" style="left:936.0px;top:489.69px;font-size:11px;width:57px;text-align:right;color:#000;letter-spacing:0.68px">1.8057</div>
<div class="a" style="left:995px;top:485px;width:67px;height:18px;background:#fff;border:1px solid #000"></div>
<div class="t" style="left:995.0px;top:489.69px;font-size:11px;width:64px;text-align:right;color:#000;letter-spacing:0.68px">26.5400</div>
<div class="a" style="left:854px;top:502px;width:83px;height:18px;background:#fff;border:1px solid #000"></div>
<div class="t" style="left:854.0px;top:506.69px;font-size:11px;width:80px;text-align:right;color:#000;letter-spacing:0.68px">0.0293</div>
<div class="a" style="left:936px;top:502px;width:60px;height:18px;background:#fff;border:1px solid #000"></div>
<div class="t" style="left:936.0px;top:506.69px;font-size:11px;width:57px;text-align:right;color:#000;letter-spacing:0.68px">1.9142</div>
<div class="a" style="left:995px;top:502px;width:67px;height:18px;background:#fff;border:1px solid #000"></div>
<div class="t" style="left:995.0px;top:506.69px;font-size:11px;width:64px;text-align:right;color:#000;letter-spacing:0.68px">28.1400</div>
<div class="a" style="left:854px;top:519px;width:83px;height:18px;background:#fff;border:1px solid #000"></div>
<div class="t" style="left:854.0px;top:523.69px;font-size:11px;width:80px;text-align:right;color:#000;letter-spacing:0.68px">0.0293</div>
<div class="a" style="left:936px;top:519px;width:60px;height:18px;background:#fff;border:1px solid #000"></div>
<div class="t" style="left:936.0px;top:523.69px;font-size:11px;width:57px;text-align:right;color:#000;letter-spacing:0.68px">2.0341</div>
<div class="a" style="left:995px;top:519px;width:67px;height:18px;background:#fff;border:1px solid #000"></div>
<div class="t" style="left:995.0px;top:523.69px;font-size:11px;width:64px;text-align:right;color:#000;letter-spacing:0.68px">29.9000</div>
<div class="a" style="left:854px;top:536px;width:83px;height:18px;background:#fff;border:1px solid #000"></div>
<div class="t" style="left:854.0px;top:540.69px;font-size:11px;width:80px;text-align:right;color:#000;letter-spacing:0.68px">0.0293</div>
<div class="a" style="left:936px;top:536px;width:60px;height:18px;background:#fff;border:1px solid #000"></div>
<div class="t" style="left:936.0px;top:540.69px;font-size:11px;width:57px;text-align:right;color:#000;letter-spacing:0.68px">2.1678</div>
<div class="a" style="left:995px;top:536px;width:67px;height:18px;background:#fff;border:1px solid #000"></div>
<div class="t" style="left:995.0px;top:540.69px;font-size:11px;width:64px;text-align:right;color:#000;letter-spacing:0.68px">31.8700</div>
<div class="a" style="left:854px;top:553px;width:83px;height:18px;background:#fff;border:1px solid #000"></div>
<div class="t" style="left:854.0px;top:557.69px;font-size:11px;width:80px;text-align:right;color:#000;letter-spacing:0.68px">0.0293</div>
<div class="a" style="left:936px;top:553px;width:60px;height:18px;background:#fff;border:1px solid #000"></div>
<div class="t" style="left:936.0px;top:557.69px;font-size:11px;width:57px;text-align:right;color:#000;letter-spacing:0.68px">2.3207</div>
<div class="a" style="left:995px;top:553px;width:67px;height:18px;background:#fff;border:1px solid #000"></div>
<div class="t" style="left:995.0px;top:557.69px;font-size:11px;width:64px;text-align:right;color:#000;letter-spacing:0.68px">34.1100</div>
<div class="a" style="left:854px;top:570px;width:83px;height:18px;background:#fff;border:1px solid #000"></div>
<div class="t" style="left:854.0px;top:574.69px;font-size:11px;width:80px;text-align:right;color:#000;letter-spacing:0.68px">0.0293</div>
<div class="a" style="left:936px;top:570px;width:60px;height:18px;background:#fff;border:1px solid #000"></div>
<div class="t" style="left:936.0px;top:574.69px;font-size:11px;width:57px;text-align:right;color:#000;letter-spacing:0.68px">2.5038</div>
<div class="a" style="left:995px;top:570px;width:67px;height:18px;background:#fff;border:1px solid #000"></div>
<div class="t" style="left:995.0px;top:574.69px;font-size:11px;width:64px;text-align:right;color:#000;letter-spacing:0.68px">36.8100</div>
<div class="a" style="left:854px;top:587px;width:83px;height:18px;background:#fff;border:1px solid #000"></div>
<div class="t" style="left:854.0px;top:591.69px;font-size:11px;width:80px;text-align:right;color:#000;letter-spacing:0.68px">0.0293</div>
<div class="a" style="left:936px;top:587px;width:60px;height:18px;background:#fff;border:1px solid #000"></div>
<div class="t" style="left:936.0px;top:591.69px;font-size:11px;width:57px;text-align:right;color:#000;letter-spacing:0.68px">2.7393</div>
<div class="a" style="left:995px;top:587px;width:67px;height:18px;background:#fff;border:1px solid #000"></div>
<div class="t" style="left:995.0px;top:591.69px;font-size:11px;width:64px;text-align:right;color:#000;letter-spacing:0.68px">40.2700</div>
<div class="a" style="left:854px;top:604px;width:83px;height:18px;background:#fff;border:1px solid #000"></div>
<div class="t" style="left:854.0px;top:608.69px;font-size:11px;width:80px;text-align:right;color:#000;letter-spacing:0.68px">0.0293</div>
<div class="a" style="left:936px;top:604px;width:60px;height:18px;background:#fff;border:1px solid #000"></div>
<div class="t" style="left:936.0px;top:608.69px;font-size:11px;width:57px;text-align:right;color:#000;letter-spacing:0.68px">3.0683</div>
<div class="a" style="left:995px;top:604px;width:67px;height:18px;background:#fff;border:1px solid #000"></div>
<div class="t" style="left:995.0px;top:608.69px;font-size:11px;width:64px;text-align:right;color:#000;letter-spacing:0.68px">45.1000</div>
<div class="a" style="left:854px;top:621px;width:83px;height:18px;background:#fff;border:1px solid #000"></div>
<div class="t" style="left:854.0px;top:625.69px;font-size:11px;width:80px;text-align:right;color:#000;letter-spacing:0.68px">0.0281</div>
<div class="a" style="left:936px;top:621px;width:60px;height:18px;background:#fff;border:1px solid #000"></div>
<div class="t" style="left:936.0px;top:625.69px;font-size:11px;width:57px;text-align:right;color:#000;letter-spacing:0.68px">3.5635</div>
<div class="a" style="left:995px;top:621px;width:67px;height:18px;background:#fff;border:1px solid #000"></div>
<div class="t" style="left:995.0px;top:625.69px;font-size:11px;width:64px;text-align:right;color:#000;letter-spacing:0.68px">52.3800</div>
<div class="a" style="left:854px;top:638px;width:83px;height:18px;background:#fff;border:1px solid #000"></div>
<div class="t" style="left:854.0px;top:642.69px;font-size:11px;width:80px;text-align:right;color:#000;letter-spacing:0.68px">0.0281</div>
<div class="a" style="left:936px;top:638px;width:60px;height:18px;background:#fff;border:1px solid #000"></div>
<div class="t" style="left:936.0px;top:642.69px;font-size:11px;width:57px;text-align:right;color:#000;letter-spacing:0.68px">4.3481</div>
<div class="a" style="left:995px;top:638px;width:67px;height:18px;background:#fff;border:1px solid #000"></div>
<div class="t" style="left:995.0px;top:642.69px;font-size:11px;width:64px;text-align:right;color:#000;letter-spacing:0.68px">63.9200</div>
<div class="a" style="left:854px;top:655px;width:83px;height:18px;background:#fff;border:1px solid #000"></div>
<div class="t" style="left:854.0px;top:659.69px;font-size:11px;width:80px;text-align:right;color:#000;letter-spacing:0.68px">0.0281</div>
<div class="a" style="left:936px;top:655px;width:60px;height:18px;background:#fff;border:1px solid #000"></div>
<div class="t" style="left:936.0px;top:659.69px;font-size:11px;width:57px;text-align:right;color:#000;letter-spacing:0.68px">5.6231</div>
<div class="a" style="left:995px;top:655px;width:67px;height:18px;background:#fff;border:1px solid #000"></div>
<div class="t" style="left:995.0px;top:659.69px;font-size:11px;width:64px;text-align:right;color:#000;letter-spacing:0.68px">82.6600</div>
<div class="a" style="left:854px;top:672px;width:83px;height:18px;background:#fff;border:1px solid #000"></div>
<div class="t" style="left:854.0px;top:676.69px;font-size:11px;width:80px;text-align:right;color:#000;letter-spacing:0.68px">0.0269</div>
<div class="a" style="left:936px;top:672px;width:60px;height:18px;background:#fff;border:1px solid #000"></div>
<div class="t" style="left:936.0px;top:676.69px;font-size:11px;width:57px;text-align:right;color:#000;letter-spacing:0.68px">7.7084</div>
<div class="a" style="left:995px;top:672px;width:67px;height:18px;background:#fff;border:1px solid #000"></div>
<div class="t" style="left:995.0px;top:676.69px;font-size:11px;width:64px;text-align:right;color:#000;letter-spacing:0.68px">113.3100</div>
<div class="a" style="left:854px;top:689px;width:83px;height:18px;background:#fff;border:1px solid #000"></div>
<div class="t" style="left:854.0px;top:693.69px;font-size:11px;width:80px;text-align:right;color:#000;letter-spacing:0.68px">0.0269</div>
<div class="a" style="left:936px;top:689px;width:60px;height:18px;background:#fff;border:1px solid #000"></div>
<div class="t" style="left:936.0px;top:693.69px;font-size:11px;width:57px;text-align:right;color:#000;letter-spacing:0.68px">11.0993</div>
<div class="a" style="left:995px;top:689px;width:67px;height:18px;background:#fff;border:1px solid #000"></div>
<div class="t" style="left:995.0px;top:693.69px;font-size:11px;width:64px;text-align:right;color:#000;letter-spacing:0.68px">163.1600</div>
<div class="a" style="left:854px;top:706px;width:83px;height:18px;background:#fff;border:1px solid #000"></div>
<div class="t" style="left:854.0px;top:710.69px;font-size:11px;width:80px;text-align:right;color:#000;letter-spacing:0.68px">0.0256</div>
<div class="a" style="left:936px;top:706px;width:60px;height:18px;background:#fff;border:1px solid #000"></div>
<div class="t" style="left:936.0px;top:710.69px;font-size:11px;width:57px;text-align:right;color:#000;letter-spacing:0.68px">16.5488</div>
<div class="a" style="left:995px;top:706px;width:67px;height:18px;background:#fff;border:1px solid #000"></div>
<div class="t" style="left:995.0px;top:710.69px;font-size:11px;width:64px;text-align:right;color:#000;letter-spacing:0.68px">243.2700</div>
<div class="a" style="left:854px;top:723px;width:83px;height:18px;background:#fff;border:1px solid #000"></div>
<div class="t" style="left:854.0px;top:727.69px;font-size:11px;width:80px;text-align:right;color:#000;letter-spacing:0.68px">0.0244</div>
<div class="a" style="left:936px;top:723px;width:60px;height:18px;background:#fff;border:1px solid #000"></div>
<div class="t" style="left:936.0px;top:727.69px;font-size:11px;width:57px;text-align:right;color:#000;letter-spacing:0.68px">25.1809</div>
<div class="a" style="left:995px;top:723px;width:67px;height:18px;background:#fff;border:1px solid #000"></div>
<div class="t" style="left:995.0px;top:727.69px;font-size:11px;width:64px;text-align:right;color:#000;letter-spacing:0.68px">370.1600</div>
<div class="a" style="left:854px;top:740px;width:83px;height:18px;background:#fff;border:1px solid #000"></div>
<div class="t" style="left:854.0px;top:744.69px;font-size:11px;width:80px;text-align:right;color:#000;letter-spacing:0.68px">0.0220</div>
<div class="a" style="left:936px;top:740px;width:60px;height:18px;background:#fff;border:1px solid #000"></div>
<div class="t" style="left:936.0px;top:744.69px;font-size:11px;width:57px;text-align:right;color:#000;letter-spacing:0.68px">38.6485</div>
<div class="a" style="left:995px;top:740px;width:67px;height:18px;background:#fff;border:1px solid #000"></div>
<div class="t" style="left:995.0px;top:744.69px;font-size:11px;width:64px;text-align:right;color:#000;letter-spacing:0.68px">568.1300</div>
<div class="a" style="left:854px;top:757px;width:83px;height:18px;background:#fff;border:1px solid #000"></div>
<div class="t" style="left:854.0px;top:761.69px;font-size:11px;width:80px;text-align:right;color:#000;letter-spacing:0.68px">0.0195</div>
<div class="a" style="left:936px;top:757px;width:60px;height:18px;background:#fff;border:1px solid #000"></div>
<div class="t" style="left:936.0px;top:761.69px;font-size:11px;width:57px;text-align:right;color:#000;letter-spacing:0.68px">59.3505</div>
<div class="a" style="left:995px;top:757px;width:67px;height:18px;background:#fff;border:1px solid #000"></div>
<div class="t" style="left:995.0px;top:761.69px;font-size:11px;width:64px;text-align:right;color:#000;letter-spacing:0.68px">872.4500</div>
<div class="a" style="left:854px;top:774px;width:83px;height:18px;background:#fff;border:1px solid #000"></div>
<div class="t" style="left:854.0px;top:778.69px;font-size:11px;width:80px;text-align:right;color:#000;letter-spacing:0.68px">0.0171</div>
<div class="a" style="left:936px;top:774px;width:60px;height:18px;background:#fff;border:1px solid #000"></div>
<div class="t" style="left:936.0px;top:778.69px;font-size:11px;width:57px;text-align:right;color:#000;letter-spacing:0.68px">90.7268</div>
<div class="a" style="left:995px;top:774px;width:67px;height:18px;background:#fff;border:1px solid #000"></div>
<div class="t" style="left:995.0px;top:778.69px;font-size:11px;width:64px;text-align:right;color:#000;letter-spacing:0.68px">1333.6800</div>
<div class="a" style="left:854px;top:791px;width:83px;height:18px;background:#fff;border:1px solid #000"></div>
<div class="t" style="left:854.0px;top:795.69px;font-size:11px;width:80px;text-align:right;color:#000;letter-spacing:0.68px">0.0134</div>
<div class="a" style="left:936px;top:791px;width:60px;height:18px;background:#fff;border:1px solid #000"></div>
<div class="t" style="left:936.0px;top:795.69px;font-size:11px;width:57px;text-align:right;color:#000;letter-spacing:0.68px">137.6577</div>
<div class="a" style="left:995px;top:791px;width:67px;height:18px;background:#fff;border:1px solid #000"></div>
<div class="t" style="left:995.0px;top:795.69px;font-size:11px;width:64px;text-align:right;color:#000;letter-spacing:0.68px">2023.5700</div>
<div class="a" style="left:854px;top:808px;width:83px;height:18px;background:#fff;border:1px solid #000"></div>
<div class="t" style="left:854.0px;top:812.69px;font-size:11px;width:80px;text-align:right;color:#000;letter-spacing:0.68px">0.0098</div>
<div class="a" style="left:936px;top:808px;width:60px;height:18px;background:#fff;border:1px solid #000"></div>
<div class="t" style="left:936.0px;top:812.69px;font-size:11px;width:57px;text-align:right;color:#000;letter-spacing:0.68px">207.0000</div>
<div class="a" style="left:995px;top:808px;width:67px;height:18px;background:#fff;border:1px solid #000"></div>
<div class="t" style="left:995.0px;top:812.69px;font-size:11px;width:64px;text-align:right;color:#000;letter-spacing:0.68px">3042.9000</div>
<div class="a" style="left:1173px;top:487px;width:55px;height:14px;background:#bad8f8"></div>
<div class="a" style="left:1116px;top:484px;width:115px;height:20px;border:3px solid #000"></div>
<div class="a" style="left:1226px;top:499px;width:7px;height:6px;background:#fff"></div>
<div class="a" style="left:1227px;top:500px;width:5px;height:5px;background:#000"></div>
<div class="a" style="left:329px;top:249px;width:513px;height:547px;background:#fff;border:1px solid #000"></div>
<svg class="a" style="left:0;top:0" width="1280" height="1023" shape-rendering="crispEdges"><rect x="389" y="264" width="1" height="480" fill="#000"/><rect x="431" y="264" width="1" height="480" fill="#000"/><rect x="474" y="264" width="1" height="480" fill="#000"/><rect x="516" y="264" width="1" height="480" fill="#000"/><rect x="558" y="264" width="1" height="480" fill="#000"/><rect x="601" y="264" width="1" height="480" fill="#000"/><rect x="643" y="264" width="1" height="480" fill="#000"/><rect x="685" y="264" width="1" height="480" fill="#000"/><rect x="728" y="264" width="1" height="480" fill="#000"/><rect x="770" y="264" width="1" height="480" fill="#000"/><rect x="813" y="264" width="1" height="480" fill="#868686"/><rect x="383" y="743" width="430" height="1" fill="#000"/><rect x="383" y="695" width="430" height="1" fill="#000"/><rect x="383" y="647" width="430" height="1" fill="#000"/><rect x="383" y="600" width="430" height="1" fill="#000"/><rect x="383" y="552" width="430" height="1" fill="#000"/><rect x="383" y="504" width="430" height="1" fill="#000"/><rect x="383" y="456" width="430" height="1" fill="#000"/><rect x="383" y="408" width="430" height="1" fill="#000"/><rect x="383" y="360" width="430" height="1" fill="#000"/><rect x="383" y="312" width="430" height="1" fill="#000"/><rect x="383" y="264" width="430" height="1" fill="#868686"/><rect x="389" y="744" width="1" height="6" fill="#000"/><rect x="397" y="744" width="1" height="4" fill="#000"/><rect x="406" y="744" width="1" height="4" fill="#000"/><rect x="414" y="744" width="1" height="4" fill="#000"/><rect x="423" y="744" width="1" height="4" fill="#000"/><rect x="431" y="744" width="1" height="6" fill="#000"/><rect x="440" y="744" width="1" height="4" fill="#000"/><rect x="448" y="744" width="1" height="4" fill="#000"/><rect x="457" y="744" width="1" height="4" fill="#000"/><rect x="465" y="744" width="1" height="4" fill="#000"/><rect x="474" y="744" width="1" height="6" fill="#000"/><rect x="482" y="744" width="1" height="4" fill="#000"/><rect x="491" y="744" width="1" height="4" fill="#000"/><rect x="499" y="744" width="1" height="4" fill="#000"/><rect x="508" y="744" width="1" height="4" fill="#000"/><rect x="516" y="744" width="1" height="6" fill="#000"/><rect x="524" y="744" width="1" height="4" fill="#000"/><rect x="533" y="744" width="1" height="4" fill="#000"/><rect x="541" y="744" width="1" height="4" fill="#000"/><rect x="550" y="744" width="1" height="4" fill="#000"/><rect x="558" y="744" width="1" height="6" fill="#000"/><rect x="567" y="744" width="1" height="4" fill="#000"/><rect x="575" y="744" width="1" height="4" fill="#000"/><rect x="584" y="744" width="1" height="4" fill="#000"/><rect x="592" y="744" width="1" height="4" fill="#000"/><rect x="601" y="744" width="1" height="6" fill="#000"/><rect x="609" y="744" width="1" height="4" fill="#000"/><rect x="618" y="744" width="1" height="4" fill="#000"/><rect x="626" y="744" width="1" height="4" fill="#000"/><rect x="635" y="744" width="1" height="4" fill="#000"/><rect x="643" y="744" width="1" height="6" fill="#000"/><rect x="651" y="744" width="1" height="4" fill="#000"/><rect x="660" y="744" width="1" height="4" fill="#000"/><rect x="668" y="744" width="1" height="4" fill="#000"/><rect x="677" y="744" width="1" height="4" fill="#000"/><rect x="685" y="744" width="1" height="6" fill="#000"/><rect x="694" y="744" width="1" height="4" fill="#000"/><rect x="702" y="744" width="1" height="4" fill="#000"/><rect x="711" y="744" width="1" height="4" fill="#000"/><rect x="719" y="744" width="1" height="4" fill="#000"/><rect x="728" y="744" width="1" height="6" fill="#000"/><rect x="736" y="744" width="1" height="4" fill="#000"/><rect x="745" y="744" width="1" height="4" fill="#000"/><rect x="753" y="744" width="1" height="4" fill="#000"/><rect x="762" y="744" width="1" height="4" fill="#000"/><rect x="770" y="744" width="1" height="6" fill="#000"/><rect x="779" y="744" width="1" height="4" fill="#000"/><rect x="787" y="744" width="1" height="4" fill="#000"/><rect x="796" y="744" width="1" height="4" fill="#000"/><rect x="804" y="744" width="1" height="4" fill="#000"/><rect x="813" y="744" width="1" height="6" fill="#000"/></svg>
<svg class="a" style="left:0;top:0" width="1280" height="1023"><text x="374" y="748.0" text-anchor="end" font-family="Liberation Sans" font-size="16.5" fill="#000">0</text><text x="374" y="700.0" text-anchor="end" font-family="Liberation Sans" font-size="16.5" fill="#000">0.1</text><text x="374" y="652.0" text-anchor="end" font-family="Liberation Sans" font-size="16.5" fill="#000">0.2</text><text x="374" y="605.0" text-anchor="end" font-family="Liberation Sans" font-size="16.5" fill="#000">0.3</text><text x="374" y="557.0" text-anchor="end" font-family="Liberation Sans" font-size="16.5" fill="#000">0.4</text><text x="374" y="509.0" text-anchor="end" font-family="Liberation Sans" font-size="16.5" fill="#000">0.5</text><text x="374" y="461.0" text-anchor="end" font-family="Liberation Sans" font-size="16.5" fill="#000">0.6</text><text x="374" y="413.0" text-anchor="end" font-family="Liberation Sans" font-size="16.5" fill="#000">0.7</text><text x="374" y="365.0" text-anchor="end" font-family="Liberation Sans" font-size="16.5" fill="#000">0.8</text><text x="374" y="317.0" text-anchor="end" font-family="Liberation Sans" font-size="16.5" fill="#000">0.9</text><text x="374" y="269.0" text-anchor="end" font-family="Liberation Sans" font-size="16.5" fill="#000">1</text><text x="390" y="771" text-anchor="middle" font-family="Liberation Sans" font-size="16.5" fill="#000">10</text><text x="432" y="771" text-anchor="middle" font-family="Liberation Sans" font-size="16.5" fill="#000">11</text><text x="475" y="771" text-anchor="middle" font-family="Liberation Sans" font-size="16.5" fill="#000">12</text><text x="517" y="771" text-anchor="middle" font-family="Liberation Sans" font-size="16.5" fill="#000">13</text><text x="559" y="771" text-anchor="middle" font-family="Liberation Sans" font-size="16.5" fill="#000">14</text><text x="602" y="771" text-anchor="middle" font-family="Liberation Sans" font-size="16.5" fill="#000">15</text><text x="644" y="771" text-anchor="middle" font-family="Liberation Sans" font-size="16.5" fill="#000">16</text><text x="686" y="771" text-anchor="middle" font-family="Liberation Sans" font-size="16.5" fill="#000">17</text><text x="729" y="771" text-anchor="middle" font-family="Liberation Sans" font-size="16.5" fill="#000">18</text><text x="771" y="771" text-anchor="middle" font-family="Liberation Sans" font-size="16.5" fill="#000">19</text><text x="814" y="771" text-anchor="middle" font-family="Liberation Sans" font-size="16.5" fill="#000">20</text><text x="684" y="342" font-family="Liberation Sans" font-size="13" fill="#000" textLength="140" lengthAdjust="spacing">Nbsim (Volts) vs. AFR</text><clipPath id="pc"><rect x="389" y="262" width="424.5" height="484"/></clipPath><path d="M390.34 323.68 C391.39 323.78 394.54 324.16 396.64 324.26 C398.74 324.36 400.85 324.16 402.94 324.26 C405.05 324.36 407.13 324.78 409.24 324.88 C411.47 324.99 413.72 324.79 415.96 324.88 C418.06 324.98 420.16 325.36 422.26 325.46 C424.36 325.56 426.46 325.46 428.56 325.46 C430.69 325.46 432.82 325.37 434.94 325.46 C437.24 325.56 439.52 325.94 441.82 326.04 C443.97 326.13 446.12 325.94 448.27 326.04 C450.42 326.13 452.57 326.52 454.72 326.61 C456.87 326.71 459.02 326.52 461.17 326.61 C463.61 326.71 466.51 326.03 468.48 327.19 C471.51 328.96 473.36 332.97 476.18 335.40 C478.58 337.46 481.52 338.88 484.16 340.68 C486.42 342.21 488.62 343.84 490.88 345.38 C494.08 347.55 497.37 349.60 500.54 351.81 C503.53 353.90 506.39 356.17 509.36 358.29 C512.13 360.28 515.06 362.07 517.76 364.15 C520.38 366.16 522.87 368.36 525.32 370.58 C528.05 373.05 530.88 375.45 533.30 378.21 C536.20 381.52 538.50 385.35 541.28 388.77 C544.38 392.58 547.96 396.01 550.94 399.91 C555.13 405.39 559.81 410.72 562.80 416.90 C568.50 428.69 575.11 440.84 576.99 453.81 C585.57 512.88 583.71 575.06 594.19 633.02 C596.22 644.28 607.65 652.06 614.52 661.47 C621.99 671.70 628.57 682.82 637.20 691.95 C644.81 700.00 653.52 708.14 663.24 713.02 C671.77 717.31 682.34 717.51 691.95 719.45 C702.66 721.61 713.37 723.96 724.20 725.31 C735.36 726.70 746.66 727.10 757.90 727.66 C770.26 728.28 782.64 728.67 795.01 728.86 C808.34 729.07 828.34 728.86 835.00 728.86" stroke="#000080" stroke-width="1.1" fill="none" clip-path="url(#pc)"/><path d="M390.3 320.1l3.6 3.6l-3.6 3.6l-3.6 -3.6z" fill="#000080"/><path d="M396.6 320.7l3.6 3.6l-3.6 3.6l-3.6 -3.6z" fill="#000080"/><path d="M402.9 320.7l3.6 3.6l-3.6 3.6l-3.6 -3.6z" fill="#000080"/><path d="M409.2 321.3l3.6 3.6l-3.6 3.6l-3.6 -3.6z" fill="#000080"/><path d="M416.0 321.3l3.6 3.6l-3.6 3.6l-3.6 -3.6z" fill="#000080"/><path d="M422.3 321.9l3.6 3.6l-3.6 3.6l-3.6 -3.6z" fill="#000080"/><path d="M428.6 321.9l3.6 3.6l-3.6 3.6l-3.6 -3.6z" fill="#000080"/><path d="M434.9 321.9l3.6 3.6l-3.6 3.6l-3.6 -3.6z" fill="#000080"/><path d="M441.8 322.4l3.6 3.6l-3.6 3.6l-3.6 -3.6z" fill="#000080"/><path d="M448.3 322.4l3.6 3.6l-3.6 3.6l-3.6 -3.6z" fill="#000080"/><path d="M454.7 323.0l3.6 3.6l-3.6 3.6l-3.6 -3.6z" fill="#000080"/><path d="M461.2 323.0l3.6 3.6l-3.6 3.6l-3.6 -3.6z" fill="#000080"/><path d="M468.5 323.6l3.6 3.6l-3.6 3.6l-3.6 -3.6z" fill="#000080"/><path d="M476.2 331.8l3.6 3.6l-3.6 3.6l-3.6 -3.6z" fill="#000080"/><path d="M484.2 337.1l3.6 3.6l-3.6 3.6l-3.6 -3.6z" fill="#000080"/><path d="M490.9 341.8l3.6 3.6l-3.6 3.6l-3.6 -3.6z" fill="#000080"/><path d="M500.5 348.2l3.6 3.6l-3.6 3.6l-3.6 -3.6z" fill="#000080"/><path d="M509.4 354.7l3.6 3.6l-3.6 3.6l-3.6 -3.6z" fill="#000080"/><path d="M517.8 360.5l3.6 3.6l-3.6 3.6l-3.6 -3.6z" fill="#000080"/><path d="M525.3 367.0l3.6 3.6l-3.6 3.6l-3.6 -3.6z" fill="#000080"/><path d="M533.3 374.6l3.6 3.6l-3.6 3.6l-3.6 -3.6z" fill="#000080"/><path d="M541.3 385.2l3.6 3.6l-3.6 3.6l-3.6 -3.6z" fill="#000080"/><path d="M550.9 396.3l3.6 3.6l-3.6 3.6l-3.6 -3.6z" fill="#000080"/><path d="M562.8 413.3l3.6 3.6l-3.6 3.6l-3.6 -3.6z" fill="#000080"/><path d="M577.0 450.2l3.6 3.6l-3.6 3.6l-3.6 -3.6z" fill="#000080"/><path d="M594.2 629.4l3.6 3.6l-3.6 3.6l-3.6 -3.6z" fill="#000080"/><path d="M614.5 657.9l3.6 3.6l-3.6 3.6l-3.6 -3.6z" fill="#000080"/><path d="M637.2 688.3l3.6 3.6l-3.6 3.6l-3.6 -3.6z" fill="#000080"/><path d="M663.2 709.4l3.6 3.6l-3.6 3.6l-3.6 -3.6z" fill="#000080"/><path d="M691.9 715.9l3.6 3.6l-3.6 3.6l-3.6 -3.6z" fill="#000080"/><path d="M724.2 721.7l3.6 3.6l-3.6 3.6l-3.6 -3.6z" fill="#000080"/><path d="M757.9 724.1l3.6 3.6l-3.6 3.6l-3.6 -3.6z" fill="#000080"/><path d="M795.0 725.3l3.6 3.6l-3.6 3.6l-3.6 -3.6z" fill="#000080"/></svg>
<div class="a" style="left:1256px;top:197px;width:24px;height:730px;background:#dde2e8"></div>
<div class="a" style="left:1276px;top:197px;width:1px;height:752px;background:#8a929c"></div>
<div class="a" style="left:1277px;top:165px;width:3px;height:784px;background:#eef1f4"></div>
<div class="a" style="left:1258px;top:198px;width:17px;height:8px;background:#fff;border:1px solid #8a929c"></div>
<div class="a" style="left:1261px;top:200px;width:11px;height:1px;background:#777"></div>
<svg class="a" style="left:1260px;top:214px" width="12" height="7" viewBox="0 0 12 7"><path d="M0 6.5H11L5.5 0.5Z" fill="#3c3f44"/></svg>
<div class="a" style="left:1256px;top:227px;width:19px;height:375px;border:1px solid #858c96;border-radius:2px;background:linear-gradient(90deg,#f1f4fa,#e4e8ef 60%,#d6dbe3)"></div>
<div class="a" style="left:1261px;top:410px;width:9px;height:1px;background:#9aa2ad"></div>
<div class="a" style="left:1261px;top:412px;width:9px;height:1px;background:#9aa2ad"></div>
<div class="a" style="left:1261px;top:414px;width:9px;height:1px;background:#9aa2ad"></div>
<div class="a" style="left:1261px;top:416px;width:9px;height:1px;background:#9aa2ad"></div>
<svg class="a" style="left:1260px;top:914px" width="12" height="7" viewBox="0 0 12 7"><path d="M0 0.5H11L5.5 6.5Z" fill="#3c3f44"/></svg>
<div class="a" style="left:0px;top:927px;width:1256px;height:21px;background:#e1e5eb"></div>
<div class="a" style="left:0px;top:927px;width:1256px;height:1px;background:#c4ccd6"></div>
<div class="a" style="left:0px;top:947px;width:1280px;height:2px;background:#8a929c"></div>
<div class="a" style="left:1256px;top:927px;width:20px;height:20px;background:#dde2e8"></div>
<div class="a" style="left:137px;top:927px;width:186px;height:1.6px;background:#000"></div>
<div class="a" style="left:854px;top:927px;width:208px;height:1.6px;background:#000"></div>
<svg class="a" style="left:6px;top:932px" width="10" height="11" viewBox="0 0 10 11"><rect x="0" y="0.5" width="1.6" height="10" fill="#3c3f44"/><path d="M9 0.5V10.5L3 5.5Z" fill="#3c3f44"/></svg>
<svg class="a" style="left:27px;top:932px" width="7" height="11" viewBox="0 0 7 11"><path d="M6 0.5V10.5L0 5.5Z" fill="#3c3f44"/></svg>
<svg class="a" style="left:45px;top:932px" width="7" height="11" viewBox="0 0 7 11"><path d="M0 0.5V10.5L6 5.5Z" fill="#3c3f44"/></svg>
<svg class="a" style="left:63px;top:932px" width="10" height="11" viewBox="0 0 10 11"><path d="M0 0.5V10.5L6 5.5Z" fill="#3c3f44"/><rect x="7.4" y="0.5" width="1.6" height="10" fill="#3c3f44"/></svg>
<div class="a" style="left:78px;top:928px;width:1px;height:19px;background:#b8c0ca"></div>
<svg class="a" style="left:75px;top:927px" width="250" height="21" viewBox="0 0 250 21"><path d="M87.5 0.5L72.5 20.5H151.5L166.5 0.5" fill="#d9dee5" stroke="#9aa3ae"/><path d="M150.5 0.5L135.5 20.5H211.5L226.5 0.5" fill="#d9dee5" stroke="#9aa3ae"/><path d="M208.5 0.5L195.5 20.5H231.5L246.5 0.5" fill="#d9dee5" stroke="#9aa3ae"/><path d="M3.5 0V20.5H65.5L80.5 0" fill="#fff" stroke="#9aa3ae"/><path d="M4 0H80" stroke="#fff" stroke-width="1.5"/></svg>
<div class="t" style="left:88.0px;top:931.85px;font-size:14px;color:#333;font-weight:bold;letter-spacing:0.9px;font-family:Liberation Sans,sans-serif">Лист1</div>
<div class="t" style="left:155.0px;top:931.85px;font-size:14px;color:#444;letter-spacing:0.4px;font-family:Liberation Sans,sans-serif">Лист2</div>
<div class="t" style="left:219.0px;top:931.85px;font-size:14px;color:#444;letter-spacing:0.4px;font-family:Liberation Sans,sans-serif">Лист3</div>
<svg class="a" style="left:281px;top:930px" width="18" height="16" viewBox="0 0 18 16"><rect x="3.5" y="4.5" width="13" height="10" rx="1" fill="#dfe8f6" stroke="#4a6aa0"/><path d="M4 0L5 3L8 4L5 5L4 8L3 5L0 4L3 3Z" fill="#f7d23a"/></svg>
<div class="a" style="left:754px;top:929px;width:9px;height:17px;background:#fff;border:1px solid #8a929c"></div>
<div class="a" style="left:757px;top:932px;width:1px;height:11px;background:#777"></div>
<svg class="a" style="left:769px;top:932px" width="7" height="11" viewBox="0 0 7 11"><path d="M6 0.5V10.5L0 5.5Z" fill="#3c3f44"/></svg>
<div class="a" style="left:784px;top:928px;width:426px;height:20px;border:1px solid #8f97a2;border-radius:2px;background:linear-gradient(180deg,#f3f5f8,#e4e8ee 60%,#d9dee5)"></div>
<div class="a" style="left:994px;top:934px;width:1px;height:7px;background:#9aa2ad"></div>
<div class="a" style="left:996px;top:934px;width:1px;height:7px;background:#9aa2ad"></div>
<div class="a" style="left:998px;top:934px;width:1px;height:7px;background:#9aa2ad"></div>
<div class="a" style="left:1000px;top:934px;width:1px;height:7px;background:#9aa2ad"></div>
<svg class="a" style="left:1232px;top:932px" width="7" height="11" viewBox="0 0 7 11"><path d="M0 0.5V10.5L6 5.5Z" fill="#3c3f44"/></svg>
<div class="a" style="left:1246px;top:929px;width:8px;height:17px;background:#fff;border:1px solid #8a929c"></div>
<div class="a" style="left:1249px;top:932px;width:1px;height:11px;background:#777"></div>
<div class="a" style="left:0px;top:949px;width:1280px;height:26px;background:linear-gradient(180deg,#eef0f3 0%,#e2e5e9 50%,#d5d9df 100%)"></div>
<div class="t" style="left:8.0px;top:956.00px;font-size:13px;color:#444">Готов</div>
<div class="a" style="left:51px;top:951px;width:1px;height:22px;background:#b6bcc5"></div>
<div class="a" style="left:994px;top:951px;width:1px;height:22px;background:#b6bcc5"></div>
<div class="a" style="left:999px;top:950px;width:23px;height:23px;border:1px solid #d9ad4b;border-radius:2px;background:linear-gradient(180deg,#fde89b,#fbd568)"></div>
<svg class="a" style="left:1002px;top:953px" width="17" height="17" viewBox="0 0 17 17"><rect x="1" y="3" width="15" height="11" fill="#fff" stroke="#444"/><path d="M1 6.5H16M1 10.5H16M6 3V14M11 3V14" stroke="#444" stroke-width="1.5"/></svg>
<svg class="a" style="left:1024px;top:953px" width="18" height="17" viewBox="0 0 18 17"><rect x="1.5" y="1.5" width="15" height="14" fill="#e8eaee" stroke="#666"/><rect x="5.5" y="3.5" width="8" height="10" fill="#fff" stroke="#888"/></svg>
<svg class="a" style="left:1047px;top:952px" width="19" height="18" viewBox="0 0 19 18"><rect x="1.5" y="1.5" width="16" height="15" fill="#c9ccd2" stroke="#777"/><rect x="3.5" y="2.5" width="4" height="8" fill="#fff" stroke="#555"/><rect x="9.5" y="2.5" width="4" height="8" fill="#fff" stroke="#555"/></svg>
<div class="t" style="left:1077.0px;top:955.50px;font-size:13px;color:#444">70%</div>
<svg class="a" style="left:1110px;top:950px" width="22" height="22" viewBox="0 0 22 22"><circle cx="11" cy="11" r="9.5" fill="#f4f5f7" stroke="#8c929a"/><path d="M6 11H16" stroke="#555" stroke-width="2"/></svg>
<div class="a" style="left:1132px;top:961px;width:122px;height:1px;background:#a4aab2"></div>
<div class="a" style="left:1193px;top:957px;width:1px;height:9px;background:#9aa0a8"></div>
<svg class="a" style="left:1173px;top:951px" width="10" height="17" viewBox="0 0 10 17"><path d="M0.5 0.5H9.5V11.5L5 16L0.5 11.5Z" fill="#f6f7f9" stroke="#6a7079"/></svg>
<svg class="a" style="left:1254px;top:950px" width="22" height="22" viewBox="0 0 22 22"><circle cx="11" cy="11" r="9.5" fill="#f4f5f7" stroke="#8c929a"/><path d="M6 11H16M11 6V16" stroke="#555" stroke-width="2"/></svg>
<div class="a" style="left:0px;top:975px;width:1280px;height:48px;background:linear-gradient(180deg,#1b3f7a 0%,#2e5ca8 6%,#2b58a4 50%,#2652a0 100%)"></div>
<div class="a" style="left:0px;top:975px;width:1280px;height:1px;background:#0e2650"></div>
<div class="a" style="left:700px;top:976px;width:580px;height:47px;background:radial-gradient(ellipse 130px 40px at 260px 32px,rgba(10,30,80,.45),rgba(10,30,80,0)),radial-gradient(ellipse 90px 30px at 500px 20px,rgba(10,30,80,.35),rgba(10,30,80,0))"></div>
<svg class="a" style="left:10px;top:977px" width="46" height="46" viewBox="0 0 46 46"><defs><radialGradient id="orb" cx=".5" cy=".35" r=".65"><stop offset="0" stop-color="#4a9ad8"/><stop offset=".55" stop-color="#1a4f98"/><stop offset="1" stop-color="#0a2656"/></radialGradient></defs><circle cx="23" cy="22" r="21" fill="url(#orb)" stroke="#9fd4f4" stroke-width="1.3"/><path d="M10 13Q15 9.5 21.5 12.5L20 21Q14 18.5 8.5 21.5Z" fill="#f2622a"/><path d="M23 12.5Q29 15.5 36 12L34.5 20.5Q28 24 21.5 21Z" fill="#86c440"/><path d="M8.3 23Q14 20 19.8 22.5L18.3 31Q12.5 28.5 7 31.5Z" fill="#2ea2e8"/><path d="M21.3 22.5Q27.5 25.5 34.3 22L32.8 30.5Q26.5 34 20 31Z" fill="#fac21a"/><ellipse cx="23" cy="11" rx="15" ry="8" fill="#fff" opacity=".16"/></svg>
<svg class="a" style="left:86px;top:981px" width="39" height="37" viewBox="0 0 39 37"><rect x="0" y="6" width="9" height="24" fill="#d8dde4" stroke="#8a9099"/><rect x="7" y="2" width="30" height="24" rx="1" fill="#c9ced6" stroke="#6a7079"/><rect x="10" y="5" width="24" height="18" fill="#103820"/><path d="M11 16L15 16L17 9L19 20L22 12L24 17L27 10L29 18L33 15" stroke="#3ce060" fill="none" stroke-width="1.3"/><path d="M10 9H34M10 13H34M10 17H34M10 21H34" stroke="#1d5a30" stroke-width=".5"/><ellipse cx="23" cy="33" rx="9" ry="3" fill="#e8ecf0" stroke="#8a9099"/><rect x="20" y="26" width="6" height="5" fill="#c9ced6"/></svg>
<svg class="a" style="left:155px;top:984px" width="34" height="34" viewBox="0 0 34 34"><rect x="4" y="1" width="26" height="31" fill="#5aa6e0" stroke="#2f6fb0"/><rect x="26" y="3" width="6" height="29" fill="#8cc8f0" stroke="#2f6fb0"/><circle cx="16" cy="16" r="10" fill="#f08a1e" stroke="#b05a10"/><path d="M12.5 10.5V21.5L22 16Z" fill="#fff"/></svg>
<svg class="a" style="left:224px;top:985px" width="42" height="29" viewBox="0 0 42 29"><rect x="0" y="0" width="42" height="29" fill="#1a2a8a"/><path d="M0 0L42 29M42 0L0 29" stroke="#fff" stroke-width="6"/><path d="M0 0L42 29M42 0L0 29" stroke="#e4141c" stroke-width="2.4"/><path d="M21 0V29M0 14.5H42" stroke="#fff" stroke-width="9"/><path d="M21 0V29M0 14.5H42" stroke="#e4141c" stroke-width="5"/></svg>
<svg class="a" style="left:294px;top:984px" width="40" height="35" viewBox="0 0 40 35"><rect x="1" y="1" width="37" height="26" fill="#6ab6e8" stroke="#3a86c8"/><rect x="3" y="3" width="33" height="22" fill="#bfe4f8"/><circle cx="11" cy="11" r="6" fill="#fff" stroke="#5aa6e0" stroke-width="1.5"/><path d="M11 5A6 6 0 0 1 17 11H11Z" fill="#f0b030"/><rect x="21" y="6" width="13" height="3" rx="1.5" fill="#fff" stroke="#5aa6e0"/><rect x="21" y="11" width="13" height="3" rx="1.5" fill="#fff" stroke="#5aa6e0"/><rect x="21" y="16" width="13" height="3" rx="1.5" fill="#fff" stroke="#5aa6e0"/><path d="M11 34Q11 26 20 26Q29 26 29 34Z" fill="#e8e8e8" stroke="#aaa"/></svg>
<svg class="a" style="left:366px;top:979px" width="38" height="40" viewBox="0 0 38 40"><ellipse cx="18" cy="19.5" rx="17" ry="18.5" fill="#e0141c"/><ellipse cx="18" cy="19.5" rx="6.5" ry="13.5" fill="#2a55a2"/><path d="M3 12Q10 1 18 1" stroke="#ff8080" stroke-width="1.5" fill="none" opacity=".6"/></svg>
<div class="a" style="left:422px;top:976px;width:66px;height:46px;border:1px solid rgba(10,25,60,.8);border-radius:3px;background:linear-gradient(180deg,rgba(255,255,255,.35),rgba(255,255,255,.12) 45%,rgba(255,255,255,.05) 55%,rgba(255,255,255,.18));box-shadow:inset 0 0 0 1px rgba(255,255,255,.25)"></div>
<div class="a" style="left:562px;top:976px;width:62px;height:46px;border:1px solid rgba(10,25,60,.8);border-radius:3px;background:linear-gradient(180deg,rgba(255,255,255,.35),rgba(255,255,255,.12) 45%,rgba(255,255,255,.05) 55%,rgba(255,255,255,.18));box-shadow:inset 0 0 0 1px rgba(255,255,255,.25)"></div>
<div class="a" style="left:626px;top:976px;width:4px;height:46px;border:1px solid rgba(10,25,60,.8);border-left:none;border-radius:0 3px 3px 0;background:rgba(255,255,255,.15)"></div>
<div class="a" style="left:632px;top:976px;width:66px;height:46px;border:1px solid rgba(10,25,60,.8);border-radius:3px;background:linear-gradient(180deg,rgba(255,255,255,.35),rgba(255,255,255,.12) 45%,rgba(255,255,255,.05) 55%,rgba(255,255,255,.18));box-shadow:inset 0 0 0 1px rgba(255,255,255,.25)"></div>
<svg class="a" style="left:435px;top:981px" width="41" height="37" viewBox="0 0 41 37"><path d="M2 6H14L17 9H38V34H2Z" fill="#e8c050" stroke="#b08a20"/><rect x="6" y="2" width="8" height="6" fill="#fff"/><rect x="4" y="4" width="3" height="3" fill="#2a8a2a"/><rect x="12" y="5" width="3" height="3" fill="#d02020"/><rect x="22" y="7" width="3" height="3" fill="#2a6ad0"/><path d="M2 13H38V34H2Z" fill="#f6d878" stroke="#b08a20"/><path d="M8 34V27Q8 22 13 22H27Q32 22 32 27V34" fill="#6ac0f0" stroke="#3a90d0"/><rect x="12" y="29" width="16" height="5" fill="#ffe8a0"/></svg>
<svg class="a" style="left:503px;top:979px" width="42" height="40" viewBox="0 0 42 40"><defs><linearGradient id="ieg" x1="0" y1="0" x2="0" y2="1"><stop offset="0" stop-color="#7fd8ff"/><stop offset="1" stop-color="#1f8fe0"/></linearGradient></defs><circle cx="21" cy="21" r="12" fill="none" stroke="url(#ieg)" stroke-width="7.5" stroke-dasharray="62 13.4" transform="rotate(62 21 21)"/><rect x="12" y="18" width="19" height="5" fill="#2a9ae8"/><path d="M5 37Q-2 30 14 14Q30 0 38 3Q43 7 34 17" stroke="#f2c21a" stroke-width="3" fill="none"/></svg>
<svg class="a" style="left:571px;top:979px" width="42" height="40" viewBox="0 0 42 40"><defs><linearGradient id="ieg" x1="0" y1="0" x2="0" y2="1"><stop offset="0" stop-color="#7fd8ff"/><stop offset="1" stop-color="#1f8fe0"/></linearGradient></defs><circle cx="21" cy="21" r="12" fill="none" stroke="url(#ieg)" stroke-width="7.5" stroke-dasharray="62 13.4" transform="rotate(62 21 21)"/><rect x="12" y="18" width="19" height="5" fill="#2a9ae8"/><path d="M5 37Q-2 30 14 14Q30 0 38 3Q43 7 34 17" stroke="#f2c21a" stroke-width="3" fill="none"/></svg>
<svg class="a" style="left:645px;top:981px" width="40" height="36" viewBox="0 0 40 36"><path d="M12 8H36V34H12Z" fill="#fff" stroke="#3a8a4a"/><path d="M14 14H34M14 19H34M14 24H34M14 29H34M22 10V32M28 10V32" stroke="#6ab87a"/><path d="M1 3H14L20 12L26 3H30L22 17L30 32H17L12 23L7 32H3L10 18Z" fill="#2a9a3a" stroke="#1a6a28" stroke-width=".8"/></svg>
<div class="t" style="left:970.0px;top:991.38px;font-size:15.5px;color:#fff">Microsoft Office</div>
<div class="t" style="left:1087.0px;top:982.30px;font-size:15px;color:#fff;font-weight:bold">»</div>
<div class="t" style="left:1108.0px;top:991.07px;font-size:13.5px;color:#fff">EN</div>
<svg class="a" style="left:1149px;top:995px" width="11" height="7" viewBox="0 0 11 7"><path d="M0.5 6.5L5.5 1 10.5 6.5Z" fill="#fff"/></svg>
<div class="t" style="left:1199.0px;top:983.15px;font-size:14px;color:#fff">23:23</div>
<div class="t" style="left:1182.0px;top:1005.15px;font-size:14px;color:#fff">20.02.2015</div>
<div class="a" style="left:1265px;top:976px;width:15px;height:47px;border:1px solid rgba(120,150,200,.8);background:linear-gradient(90deg,rgba(255,255,255,.15),rgba(255,255,255,.05))"></div>
</body></html>
